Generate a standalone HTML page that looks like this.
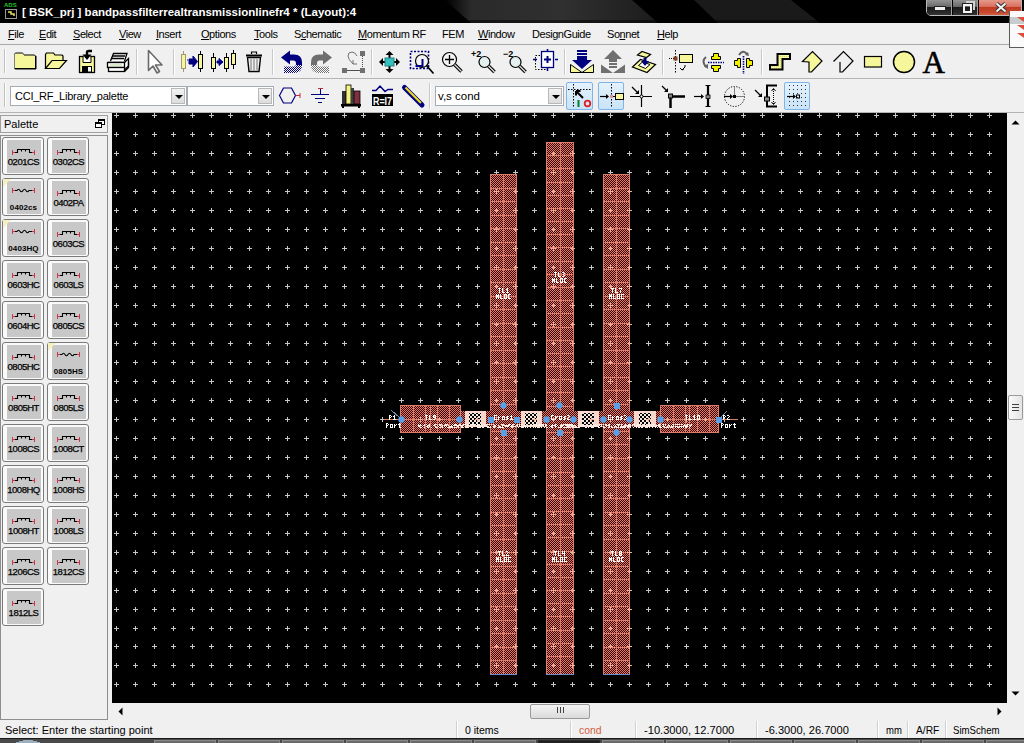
<!DOCTYPE html><html><head><meta charset="utf-8"><style>
*{margin:0;padding:0;box-sizing:border-box}
html,body{width:1024px;height:743px;overflow:hidden;background:#f0f0f0;font-family:"Liberation Sans", sans-serif;font-size:11px;color:#000}
.a{position:absolute}
.t{position:absolute;white-space:nowrap;line-height:1}
.u{text-decoration:underline}
.sep{position:absolute;width:2px;border-left:1px solid #c8c8c8;border-right:1px solid #fff}
.grip{position:absolute;width:2px;border-left:1px solid #c0c0c0;border-right:1px solid #fff}
.combo{position:absolute;background:#fff;border:1px solid #a5acb5}
.cbtn{position:absolute;background:linear-gradient(#f3f3f3,#dcdcdc);border:1px solid #b8b8b8}
.cbtn:after{content:"";position:absolute;left:3px;top:6px;border-left:4px solid transparent;border-right:4px solid transparent;border-top:4px solid #000}
.tog{position:absolute;background:linear-gradient(#e4f2fc,#c9e3f7);border:1px solid #7eb4ea;border-radius:2px}
.pb{position:absolute;width:42px;height:38px;border:1px solid #7a7a7a;border-radius:3px;background:#fafafa}
.pbi{position:absolute;left:4px;top:2px;width:34px;height:33px;background:#c8c8c8}
.pt{position:absolute;left:0;width:41px;top:18.5px;text-align:center;font-size:9.5px;letter-spacing:-0.5px;line-height:1;-webkit-text-stroke:0.25px #000}
.lbl{position:absolute;color:#fff;font-family:"Liberation Mono",monospace;font-size:6px;line-height:1;white-space:nowrap;font-weight:bold}
</style></head><body>
<svg class="a" style="left:0;top:0" width="1024" height="23"><defs><linearGradient id="tb1" x1="0" x2="1"><stop offset="0" stop-color="#000"/><stop offset="0.12" stop-color="#2a2a2a"/><stop offset="0.55" stop-color="#303030"/><stop offset="1" stop-color="#1c1c1c"/></linearGradient><filter id="bl" x="-0.2" y="-0.5" width="1.4" height="2"><feGaussianBlur stdDeviation="2.5 0"/></filter></defs><rect width="1024" height="23" fill="#000"/><path d="M445 0H632L658 23H471Z" fill="url(#tb1)"/><path d="M694 0H791L820 23H718Z" fill="#1a1a1a"/><rect y="20" width="1024" height="3" fill="#000" opacity="0.5"/></svg>
<svg class="a" style="left:3px;top:1px" width="16" height="20" viewBox="0 0 16 20"><text x="1" y="6" font-size="6" fill="#27c427" font-family="Liberation Sans" font-weight="bold">ADS</text><rect x="2.5" y="8.5" width="11" height="9" fill="#000" stroke="#9a9a9a"/><path d="M5 11h3v2h3v2" stroke="#e8e060" stroke-width="1.5" fill="none"/></svg>
<div class="t" style="left:22px;top:7px;color:#fff;font-weight:bold;font-size:11.5px;text-shadow:0 0 2px #000">[ BSK_prj ] bandpassfilterrealtransmissionlinefr4 * (Layout):4</div>
<div class="a" style="left:926px;top:-2px;width:96px;height:18px;border:1px solid #b8b8b8;border-radius:0 0 5px 5px;overflow:hidden;background:#000;box-shadow:0 0 0 1px #000"><div class="a" style="left:0;top:0;width:25px;height:17px;background:linear-gradient(#9a9a9a,#6a6a6a 45%,#1a1a1a 50%,#2a2a2a 80%,#3a3a3a);border-right:1px solid #a0a0a0"></div><div class="a" style="left:26px;top:0;width:25px;height:17px;background:linear-gradient(#9a9a9a,#6a6a6a 45%,#1a1a1a 50%,#2a2a2a 80%,#3a3a3a);border-right:1px solid #a0a0a0"></div><div class="a" style="left:52px;top:0;width:44px;height:17px;background:linear-gradient(#e8a090,#d87060 45%,#c03a20 50%,#c84a30 80%,#d86a50)"></div><div class="a" style="left:8px;top:8px;width:10px;height:3px;background:#f0f0f0;box-shadow:0 0 0 1px #222"></div><div class="a" style="left:36px;top:5px;width:9px;height:9px;border:2px solid #f4f4f4;box-shadow:0 0 0 1px #222"></div><div class="a" style="left:39px;top:2px;width:9px;height:9px;border-top:2px solid #d0d0d0;border-right:2px solid #d0d0d0"></div><svg class="a" style="left:67px;top:3px" width="14" height="12"><path d="M2.5 1.5l9 8M11.5 1.5l-9 8" stroke="#333" stroke-width="4"/><path d="M2.5 1.5l9 8M11.5 1.5l-9 8" stroke="#f4f4f4" stroke-width="2"/></svg></div>
<div class="a" style="left:0;top:23px;width:1024px;height:21px;background:#f0f0f0"></div>
<div class="a" style="left:0;top:44px;width:1024px;height:1px;background:#a8a8a8"></div>
<div class="a" style="left:1009px;top:11px;width:15px;height:37px;background:#fafafa;border-left:1px solid #5a5a5a;border-bottom:1px solid #5a5a5a"><div class="a" style="left:0;top:6px;width:15px;height:7px;background:#c8cccc"></div><svg class="a" style="left:7px;top:6px" width="10" height="26"><path d="M0 0H10V7Z M0 8H10V15Z M0 16H10V23Z" fill="#d8503a"/></svg></div>
<div class="t" style="left:8px;top:29px;letter-spacing:-0.45px"><span class="u">F</span>ile</div>
<div class="t" style="left:39px;top:29px;letter-spacing:-0.45px"><span class="u">E</span>dit</div>
<div class="t" style="left:73px;top:29px;letter-spacing:-0.45px"><span class="u">S</span>elect</div>
<div class="t" style="left:119px;top:29px;letter-spacing:-0.45px"><span class="u">V</span>iew</div>
<div class="t" style="left:156px;top:29px;letter-spacing:-0.45px"><span class="u">I</span>nsert</div>
<div class="t" style="left:201px;top:29px;letter-spacing:-0.45px"><span class="u">O</span>ptions</div>
<div class="t" style="left:254px;top:29px;letter-spacing:-0.45px"><span class="u">T</span>ools</div>
<div class="t" style="left:294px;top:29px;letter-spacing:-0.45px">S<span class="u">c</span>hematic</div>
<div class="t" style="left:358px;top:29px;letter-spacing:-0.45px"><span class="u">M</span>omentum RF</div>
<div class="t" style="left:442px;top:29px;letter-spacing:-0.45px">FEM</div>
<div class="t" style="left:478px;top:29px;letter-spacing:-0.45px"><span class="u">W</span>indow</div>
<div class="t" style="left:532px;top:29px;letter-spacing:-0.45px">DesignGuide</div>
<div class="t" style="left:607px;top:29px;letter-spacing:-0.45px">So<span class="u">n</span>net</div>
<div class="t" style="left:657px;top:29px;letter-spacing:-0.45px"><span class="u">H</span>elp</div>
<div class="a" style="left:0;top:78px;width:1024px;height:1px;background:#b4b4b4"></div>
<div class="grip" style="left:4px;top:49px;height:24px"></div>
<div class="sep" style="left:136px;top:49px;height:26px"></div>
<div class="sep" style="left:173px;top:49px;height:26px"></div>
<div class="sep" style="left:272px;top:49px;height:26px"></div>
<div class="sep" style="left:371px;top:49px;height:26px"></div>
<div class="sep" style="left:564px;top:49px;height:26px"></div>
<div class="sep" style="left:662px;top:49px;height:26px"></div>
<div class="sep" style="left:761px;top:49px;height:26px"></div>
<div class="a" style="left:0;top:112px;width:1024px;height:1px;background:#b4b4b4"></div>
<div class="grip" style="left:4px;top:83px;height:24px"></div>
<div class="combo" style="left:10px;top:86px;width:177px;height:20px"></div>
<div class="t" style="left:15px;top:91px;font-size:11px;letter-spacing:-0.25px">CCI_RF_Library_palette</div>
<div class="cbtn" style="left:171px;top:88px;width:14px;height:16px"></div>
<div class="combo" style="left:187px;top:86px;width:87px;height:20px"></div>
<div class="cbtn" style="left:258px;top:88px;width:14px;height:16px"></div>
<div class="sep" style="left:429px;top:83px;height:26px"></div>
<div class="combo" style="left:435px;top:86px;width:129px;height:20px"></div>
<div class="t" style="left:438px;top:91px;font-size:11.5px">v,s cond</div>
<div class="cbtn" style="left:548px;top:88px;width:14px;height:16px"></div>
<div class="tog" style="left:566px;top:82px;width:27px;height:28px"></div>
<div class="tog" style="left:598px;top:82px;width:26px;height:28px"></div>
<div class="tog" style="left:784px;top:82px;width:26px;height:28px"></div>
<svg class="a" style="left:0;top:0" width="1024" height="113" viewBox="0 0 1024 113"><defs><pattern id="dy" width="2" height="2" patternUnits="userSpaceOnUse"><rect width="2" height="2" fill="#f8f8a0"/><rect width="1" height="1" fill="#d8d870"/></pattern><pattern id="dn" width="2" height="2" patternUnits="userSpaceOnUse"><rect width="2" height="2" fill="#fff"/><rect width="1" height="1" fill="#000080"/><rect x="1" y="1" width="1" height="1" fill="#000080"/></pattern><pattern id="dg" width="2" height="2" patternUnits="userSpaceOnUse"><rect width="2" height="2" fill="#fff"/><rect width="1" height="1" fill="#6e6e6e"/><rect x="1" y="1" width="1" height="1" fill="#6e6e6e"/></pattern><pattern id="gd" width="4" height="4" patternUnits="userSpaceOnUse"><rect x="1" y="1" width="1" height="1" fill="#303030"/></pattern></defs><path d="M14.5 68.5V54.5l1-1.5h7l1.5 2h10.5l1 1v12.5z" fill="#f6f69a" stroke="#000"/><path d="M14.5 68.5V54.5l1-1.5h7l1.5 2" stroke="#808080" fill="none"/><rect x="15" y="68" width="21" height="1.5" fill="#000"/><rect x="35" y="56" width="1.5" height="13" fill="#000"/><path d="M45.5 68.5V54.5l1-1.5h7l1.5 2h7l1 1v4" fill="#f6f69a" stroke="#000" stroke-width="1.2"/><path d="M45.5 68.5L52 60.5h14.5l-7 8z" fill="#f6f69a" stroke="#000" stroke-width="1.2"/><rect x="79.5" y="56.5" width="15" height="16" fill="#f6f69a" stroke="#000" stroke-width="1.3"/><rect x="83.5" y="55.8" width="7" height="6.5" fill="#fff"/><path d="M83 55.8v6.7h8v-6.7" stroke="#000" fill="none"/><rect x="82" y="66" width="10" height="6.5" fill="#000"/><rect x="88" y="67" width="3" height="4.5" fill="#fff"/><path d="M82.5 54.5h9l-4.5 5.5z" fill="#000"/><path d="M87 55.5v-3q0-1.5 1.5-1.5h3.5" stroke="#000" stroke-width="2.4" fill="none"/><path d="M110.5 61L113.5 53.5H127L124.5 61" fill="#fff" stroke="#000" stroke-width="1.3"/><path d="M112.5 56h12.5M111.5 58.5h12.5" stroke="#000" stroke-width="1.3"/><path d="M108 62.5H124.5L128.5 58.5V66L124.5 70" fill="#fff" stroke="#000" stroke-width="1.3"/><rect x="107.5" y="62.5" width="17" height="5" fill="#fff" stroke="#000" stroke-width="1.3"/><rect x="110" y="64.5" width="12" height="1" fill="#b8d890"/><rect x="108.5" y="67.5" width="16" height="4" fill="#fff" stroke="#000" stroke-width="1.3"/><path d="M124.5 71.5L128.5 67.5V62" fill="none" stroke="#000" stroke-width="1.3"/><path d="M148.5 50.5v20l4.5-4.5 4 7 2.5-1.5-4-6.5h6.5z" fill="#fff" stroke="#6a6a6a" stroke-width="1.6" stroke-linejoin="round"/><path d="M183.5 51v21M200.5 51v21" stroke="#000" /><path d="M183.5 51v21" stroke="#a09870"/><rect x="181.5" y="54.5" width="4" height="14" fill="#f6f69a" stroke="#a09870"/><rect x="198.5" y="54.5" width="4" height="14" fill="#f6f69a" stroke="#000"/><path d="M187 60h1M189 59h4v-3l4.5 5.5-4.5 5.5v-3h-4z" fill="#000080" stroke="#000080" stroke-width="1"/><path d="M213.5 53v19" stroke="#000"/><rect x="211.5" y="57.5" width="4" height="11.0" fill="#f6f69a" stroke="#000"/><path d="M226.5 53v19" stroke="#000"/><rect x="224.5" y="57.5" width="4" height="11.0" fill="#f6f69a" stroke="#000"/><path d="M233.5 50v19" stroke="#000"/><rect x="231.5" y="53.5" width="4" height="11.0" fill="#f6f69a" stroke="#000"/><path d="M217 61h2v-2.5l4 3.5-4 3.5v-2.5h-2z" fill="#000080" stroke="#000080" stroke-width="1"/><path d="M246 55.5h16" stroke="#000" stroke-width="2"/><path d="M251.5 54v-2h5v2" stroke="#000" fill="none" stroke-width="1.2"/><path d="M247.5 57.5l1.5 14h10l1.5-14z" fill="#f0f0f0" stroke="#000" stroke-width="1.4"/><path d="M251 59v11M254 59v11M257 59v11" stroke="#707070"/><clipPath id="ctop"><rect x="0" y="0" width="1024" height="65"/></clipPath><clipPath id="cbot"><rect x="0" y="65" width="1024" height="20"/></clipPath><path d="M281 57.5L290 50.5V54.5H294Q302 54.5 302 62.5V65.5Q302 73 294 73H284V66.5H293.5Q296 66.5 296 64V63.5Q296 60.5 293.5 60.5H290V64.5Z" fill="#000080" clip-path="url(#ctop)"/><path d="M281 57.5L290 50.5V54.5H294Q302 54.5 302 62.5V65.5Q302 73 294 73H284V66.5H293.5Q296 66.5 296 64V63.5Q296 60.5 293.5 60.5H290V64.5Z" fill="url(#dn)" clip-path="url(#cbot)"/><g transform="translate(613,0) scale(-1,1)"><path d="M281 57.5L290 50.5V54.5H294Q302 54.5 302 62.5V65.5Q302 73 294 73H284V66.5H293.5Q296 66.5 296 64V63.5Q296 60.5 293.5 60.5H290V64.5Z" fill="#6e6e6e" clip-path="url(#ctop)"/><path d="M281 57.5L290 50.5V54.5H294Q302 54.5 302 62.5V65.5Q302 73 294 73H284V66.5H293.5Q296 66.5 296 64V63.5Q296 60.5 293.5 60.5H290V64.5Z" fill="url(#dg)" clip-path="url(#cbot)"/></g><rect x="360" y="51" width="5" height="5" fill="#707070"/><rect x="342" y="68" width="5" height="5" fill="#707070"/><rect x="360" y="68" width="5" height="5" fill="#707070"/><path d="M347 70.5h13" stroke="#505050"/><path d="M362.5 56v12" stroke="#505050" stroke-dasharray="1 1"/><path d="M357 56q-2-4-5-4q-4 0-4 4q0 3 5 8M353 60v4h4" stroke="#707070" fill="none"/><path d="M389.5 51l-4 4h8z M389.5 73l-4-4h8z M379 62l4-4v8z M400 62l-4-4v8z" fill="#000"/><path d="M389.5 54v16M382 62h16" stroke="#000" stroke-width="2"/><rect x="385" y="58" width="9" height="8" fill="#38c0c0" stroke="#208080"/><rect x="410.5" y="51.5" width="18" height="17" fill="none" stroke="#000080" stroke-width="1.6" stroke-dasharray="2 1.5"/><circle cx="422" cy="61" r="6.5" fill="#f4f4f4" stroke="#000" stroke-width="1.2"/><path d="M415.5 66h7v-7" stroke="#000080" stroke-width="2" fill="none"/><path d="M426.5 65.5l7 8" stroke="#000" stroke-width="1.6"/><circle cx="449.5" cy="59.5" r="7" fill="#f4f4f4" stroke="#000" stroke-width="1.2"/><path d="M445 59.5h9M449.5 55v9" stroke="#000" stroke-width="1.3"/><path d="M454.5 64.5l7 7" stroke="#000" stroke-width="3.6"/><path d="M454.5 64.5l7 7" stroke="#e0e0e0" stroke-width="1.2"/><circle cx="484.5" cy="62" r="5.5" fill="#e4f0f0" stroke="#000" stroke-width="1.2"/><path d="M488.5 66l6 6" stroke="#000" stroke-width="3.6"/><path d="M488.5 66l6 6" stroke="#e8e8e8" stroke-width="1.2"/><text x="471" y="57" font-family="Liberation Sans" font-size="9" font-weight="bold" fill="#000">+2</text><circle cx="515.5" cy="62" r="5.5" fill="#e4f0f0" stroke="#000" stroke-width="1.2"/><path d="M519.5 66l6 6" stroke="#000" stroke-width="3.6"/><path d="M519.5 66l6 6" stroke="#e8e8e8" stroke-width="1.2"/><text x="503" y="57" font-family="Liberation Sans" font-size="9" font-weight="bold" fill="#000">−2</text><rect x="535.5" y="55.5" width="10" height="14" fill="none" stroke="#000" stroke-dasharray="1.5 1.5"/><rect x="541.5" y="51.5" width="12" height="16" fill="#fff" stroke="#000080" stroke-width="1.3"/><path d="M544 59.5h7M547.5 56v7" stroke="#000080" stroke-width="2"/><path d="M533 59.5h4M555 59.5h3M547.5 49v3M547.5 68v3" stroke="#000080" stroke-width="1.6"/><path d="M570.5 64.5v8h23v-8l-11.5 8z" fill="#f6f69a" stroke="#000"/><rect x="577" y="50" width="10" height="2" fill="#000080"/><rect x="577" y="53" width="10" height="2" fill="#000080"/><path d="M577 56h10v4h5l-10 9-10-9h5z" fill="#000080"/><path d="M601 64.5v8.5h24v-8.5l-12 8.5z" fill="#707070"/><path d="M613 50l-9 9h5v3h8v-3h5z" fill="#707070"/><rect x="609" y="63" width="8" height="2" fill="#707070"/><rect x="609" y="66" width="8" height="2" fill="#707070"/><path d="M632.5 67L640.5 59.5L655.5 64.5L647 72.5Z" fill="#f6f69a" stroke="#000" stroke-width="1.2"/><path d="M638.5 65.5L642.5 62L650 64.5L645.5 68.5Z" fill="#fff" stroke="#000" stroke-width="1"/><path d="M637.5 55L642 51.5L650.5 54.5L646.5 57.5Z" fill="#f6f69a" stroke="#000" stroke-width="1.2"/><path d="M643.5 58h3v3h2.5l-4 5-4-5h2.5z" fill="#000080"/><path d="M675.5 50v23" stroke="#000" stroke-dasharray="1.5 1.5"/><path d="M669 58.5h6" stroke="#000" stroke-dasharray="1 1"/><rect x="673.5" y="56.5" width="4" height="4" fill="#804020"/><rect x="679.5" y="54.5" width="13" height="8" fill="#f6f69a" stroke="#000"/><path d="M685 65v2l-3 3M680 68l2 2 2-1" stroke="#000" fill="none"/><path d="M711.5 59.5v-3h2v-3h5v3h2v3z M711.5 65.5v3h2v3h5v-3h2v-3z" fill="#f0f000" stroke="#000"/><path d="M708 62.5h16" stroke="#000080" stroke-width="1.6" stroke-dasharray="1.5 1"/><path d="M706 57q-5 4 0 10" stroke="#606060" stroke-width="2" fill="none"/><path d="M704 66l4 3v-5z" fill="#606060"/><path d="M740.5 58.5h-3v2h-3v5h3v2h3z M746.5 58.5h3v2h3v5h-3v2h-3z" fill="#f0f000" stroke="#000"/><path d="M743.5 56v18" stroke="#000080" stroke-width="1.6" stroke-dasharray="1.5 1"/><path d="M739 55q4-6 8-1" stroke="#606060" stroke-width="2" fill="none"/><path d="M745 55l4 1-1-4z" fill="#606060"/><path d="M769 64h7.5v-11h14.5v7h-7.5v10.5h-14.5z" fill="#000"/><path d="M771 66h7.5v-11h10.5v3h-7.5v10.5h-10.5z" fill="url(#dy)"/><path d="M802.5 61.5l10-10 9.5 9.5-10.5 11h-2.5v-10z" fill="#f6f69a" stroke="#000" stroke-width="1.2" stroke-linejoin="miter"/><path d="M833.5 61.5l10-10 9.5 9.5-10.5 11h-2.5v-10" fill="none" stroke="#000" stroke-width="1.2"/><rect x="864.5" y="56.5" width="17" height="10.5" fill="#f6f69a" stroke="#000" stroke-width="1.2"/><circle cx="904" cy="62" r="10.5" fill="#f6f69a" stroke="#000" stroke-width="1.5"/><text x="922.5" y="72.5" font-family="Liberation Serif" font-size="31" fill="#000" stroke="#000" stroke-width="0.6">A</text><path d="M283.5 88l-4 7.5 4 7.5h8l4-7.5-4-7.5z" fill="none" stroke="#000080" stroke-width="1.2"/><path d="M295.5 95.5h4.5M300 93v5" stroke="#c03040"/><path d="M311 94.5h18M315 98.5h10M318 102.5h4" stroke="#000080" stroke-width="1.2"/><path d="M320.5 88v6" stroke="#000080"/><path d="M318 88.5h5" stroke="#c03040"/><rect x="341" y="104" width="20" height="2.5" fill="#000"/><rect x="342" y="106" width="2" height="2" fill="#000"/><rect x="358" y="106" width="2" height="2" fill="#000"/><rect x="342" y="91" width="4" height="13" fill="#303030"/><rect x="346" y="85" width="5" height="19" fill="#f4f480" stroke="#000" stroke-width="0.8"/><rect x="351" y="88" width="3" height="16" fill="#404040"/><rect x="354" y="91" width="6" height="13" fill="#803040" stroke="#000" stroke-width="0.8"/><rect x="372" y="94" width="21" height="12" fill="#000"/><text x="373" y="104.5" font-family="Liberation Sans" font-size="10" font-weight="bold" fill="#fff" textLength="19" lengthAdjust="spacingAndGlyphs">R=I7</text><path d="M372 90.5h4l4-4.5 5 5.5 3-2h5" stroke="#000080" stroke-width="1.5" fill="none"/><path d="M404.5 87.5L422 105" stroke="#000080" stroke-width="5" stroke-linecap="round"/><path d="M405.5 87.5L421 103" stroke="#e8d820" stroke-width="2.2"/><path d="M573.5 84v24" stroke="#000" stroke-dasharray="1.5 1.5"/><path d="M568 89.5h24" stroke="#000" stroke-dasharray="1.5 1.5"/><path d="M576 91l7 7M576 91h4.5M576 91v4.5" stroke="#000" stroke-width="2"/><rect x="577.5" y="100" width="2" height="7" fill="#008030"/><circle cx="587.5" cy="103.5" r="2.8" fill="none" stroke="#e02020" stroke-width="1.8"/><path d="M611.5 84v24" stroke="#000" stroke-dasharray="1.5 1.5"/><path d="M600 96.5h8" stroke="#000" stroke-width="1.2"/><path d="M606 94l3 2.5-3 2.5z" fill="#000"/><rect x="610" y="95" width="3" height="3" fill="#e09090"/><path d="M613 96.5h2" stroke="#000"/><rect x="615.5" y="93.5" width="8" height="6" fill="#f6f69a" stroke="#000"/><path d="M641.5 85v22M630 96.5h22" stroke="#000" stroke-width="1.2"/><circle cx="641.5" cy="96.5" r="1.5" fill="#fff" stroke="#000"/><path d="M632 87l6 6" stroke="#000" stroke-width="1.2"/><path d="M639 94v-4l-4 4z" fill="#000"/><path d="M671 96.5h14" stroke="#000" stroke-width="2.5"/><path d="M670.5 96v12" stroke="#000" stroke-width="2.5"/><rect x="668.5" y="94" width="4" height="4" fill="#808080" stroke="#000"/><path d="M662 86l5 5" stroke="#000" stroke-width="1.2"/><path d="M668 92v-4l-4 4z" fill="#000"/><path d="M708 85v22" stroke="#000" stroke-width="2.2"/><path d="M705.5 85.5h5M705.5 106.5h5" stroke="#000" stroke-width="1.2"/><rect x="706" y="95" width="4" height="3.5" fill="#909090" stroke="#000" stroke-width="0.8"/><path d="M694 96.5h8" stroke="#000" stroke-width="1.2"/><path d="M701 94l3 2.5-3 2.5z" fill="#000"/><circle cx="734.5" cy="96.5" r="10" fill="none" stroke="#000" stroke-dasharray="1.2 1.5"/><path d="M734.5 96.5v-10M734.5 96.5h10" stroke="#808080"/><rect x="733" y="95" width="3" height="3" fill="#000"/><path d="M724 96.5h7" stroke="#000" stroke-width="1.2"/><path d="M730 94l3 2.5-3 2.5z" fill="#000"/><path d="M777 85.5h-10v21h10" stroke="#000" stroke-width="2" fill="none"/><rect x="764.5" y="97" width="5" height="4" fill="#909090" stroke="#000"/><path d="M773.5 89v15" stroke="#000" stroke-dasharray="1 1"/><path d="M771.5 91l2-2.5 2 2.5M771.5 102l2 2.5 2-2.5" stroke="#000" fill="none"/><path d="M755 90l6 6" stroke="#000" stroke-width="1.2"/><path d="M762 97v-4l-4 4z" fill="#000"/><rect x="786" y="85" width="22" height="22" fill="url(#gd)"/><path d="M787 96.5h7" stroke="#000" stroke-width="1.2"/><path d="M793 94l3 2.5-3 2.5z" fill="#000"/><rect x="796.5" y="95" width="3" height="3" fill="none" stroke="#000"/></svg>
<div class="a" style="left:0;top:115px;width:108px;height:18px;border:1px solid #a0a0a0;background:#f0f0f0"></div>
<div class="t" style="left:4px;top:119px;font-size:11px">Palette</div>
<svg class="a" style="left:95px;top:118px" width="10" height="11"><rect x="3.5" y="1.5" width="6" height="5" fill="#fff" stroke="#000"/><rect x="3.5" y="1.5" width="6" height="1.5" fill="#000"/><rect x="0.5" y="4.5" width="6" height="5" fill="#fff" stroke="#000"/><rect x="0.5" y="4.5" width="6" height="1.5" fill="#000"/></svg>
<div class="a" style="left:0;top:135px;width:108px;height:585px;border:1px solid #8e8e8e;background:#f0f0f0"></div>
<div class="pb" style="left:2px;top:137px"><div class="pbi"></div><svg class="a" style="left:9px;top:11px" width="24" height="8" viewBox="0 0 24 8"><path d="M0.5 1v5M22.5 1v5" stroke="#c83850" stroke-width="1"/><path d="M0.5 3.5h3" stroke="#c83850"/><path d="M19.5 3.5h3" stroke="#c83850"/><path d="M3 3.5H5.5V0.5H17.5V3.5H20M9.5 0.5v2M13.5 0.5v2" stroke="#000" fill="none" stroke-width="1.1"/></svg><div class="pt">0201CS</div></div>
<div class="pb" style="left:47px;top:137px"><div class="pbi"></div><svg class="a" style="left:9px;top:11px" width="24" height="8" viewBox="0 0 24 8"><path d="M0.5 1v5M22.5 1v5" stroke="#c83850" stroke-width="1"/><path d="M0.5 3.5h3" stroke="#c83850"/><path d="M19.5 3.5h3" stroke="#c83850"/><path d="M3 3.5H5.5V0.5H17.5V3.5H20M9.5 0.5v2M13.5 0.5v2" stroke="#000" fill="none" stroke-width="1.1"/></svg><div class="pt">0302CS</div></div>
<div class="pb" style="left:2px;top:178px"><div class="pbi"></div><div class="a" style="left:0;top:0;width:0;height:0;border-top:8px solid #f4f0c0;border-right:8px solid transparent"></div><svg class="a" style="left:9px;top:8px" width="24" height="8" viewBox="0 0 24 8"><path d="M0.5 1v5M22.5 1v5" stroke="#c83850" stroke-width="1"/><path d="M0.5 3.5h3" stroke="#c83850"/><path d="M19.5 3.5h3" stroke="#c83850"/><path d="M3 3.5H5Q6.5 1 8 3.5T11 3.5T14 3.5T17 3.5H20" stroke="#000" fill="none" stroke-width="1.1"/><path d="M0 0l4 0l-4 4z" fill="#f4f0b0" transform="translate(-5,-7)"/></svg><div class="pt" style="font-size:8px;font-weight:bold;letter-spacing:0.1px;top:25px;-webkit-text-stroke:0">0402cs</div></div>
<div class="pb" style="left:47px;top:178px"><div class="pbi"></div><svg class="a" style="left:9px;top:11px" width="24" height="8" viewBox="0 0 24 8"><path d="M0.5 1v5M22.5 1v5" stroke="#c83850" stroke-width="1"/><path d="M0.5 3.5h3" stroke="#c83850"/><path d="M19.5 3.5h3" stroke="#c83850"/><path d="M3 3.5H5.5V0.5H17.5V3.5H20M9.5 0.5v2M13.5 0.5v2" stroke="#000" fill="none" stroke-width="1.1"/></svg><div class="pt">0402PA</div></div>
<div class="pb" style="left:2px;top:219px"><div class="pbi"></div><div class="a" style="left:0;top:0;width:0;height:0;border-top:8px solid #f4f0c0;border-right:8px solid transparent"></div><svg class="a" style="left:9px;top:8px" width="24" height="8" viewBox="0 0 24 8"><path d="M0.5 1v5M22.5 1v5" stroke="#c83850" stroke-width="1"/><path d="M0.5 3.5h3" stroke="#c83850"/><path d="M19.5 3.5h3" stroke="#c83850"/><path d="M3 3.5H5Q6.5 1 8 3.5T11 3.5T14 3.5T17 3.5H20" stroke="#000" fill="none" stroke-width="1.1"/><path d="M0 0l4 0l-4 4z" fill="#f4f0b0" transform="translate(-5,-7)"/></svg><div class="pt" style="font-size:8px;font-weight:bold;letter-spacing:0.1px;top:25px;-webkit-text-stroke:0">0403HQ</div></div>
<div class="pb" style="left:47px;top:219px"><div class="pbi"></div><svg class="a" style="left:9px;top:11px" width="24" height="8" viewBox="0 0 24 8"><path d="M0.5 1v5M22.5 1v5" stroke="#c83850" stroke-width="1"/><path d="M0.5 3.5h3" stroke="#c83850"/><path d="M19.5 3.5h3" stroke="#c83850"/><path d="M3 3.5H5.5V0.5H17.5V3.5H20M9.5 0.5v2M13.5 0.5v2" stroke="#000" fill="none" stroke-width="1.1"/></svg><div class="pt">0603CS</div></div>
<div class="pb" style="left:2px;top:260px"><div class="pbi"></div><svg class="a" style="left:9px;top:11px" width="24" height="8" viewBox="0 0 24 8"><path d="M0.5 1v5M22.5 1v5" stroke="#c83850" stroke-width="1"/><path d="M0.5 3.5h3" stroke="#c83850"/><path d="M19.5 3.5h3" stroke="#c83850"/><path d="M3 3.5H5.5V0.5H17.5V3.5H20M9.5 0.5v2M13.5 0.5v2" stroke="#000" fill="none" stroke-width="1.1"/></svg><div class="pt">0603HC</div></div>
<div class="pb" style="left:47px;top:260px"><div class="pbi"></div><svg class="a" style="left:9px;top:11px" width="24" height="8" viewBox="0 0 24 8"><path d="M0.5 1v5M22.5 1v5" stroke="#c83850" stroke-width="1"/><path d="M0.5 3.5h3" stroke="#c83850"/><path d="M19.5 3.5h3" stroke="#c83850"/><path d="M3 3.5H5.5V0.5H17.5V3.5H20M9.5 0.5v2M13.5 0.5v2" stroke="#000" fill="none" stroke-width="1.1"/></svg><div class="pt">0603LS</div></div>
<div class="pb" style="left:2px;top:301px"><div class="pbi"></div><svg class="a" style="left:9px;top:11px" width="24" height="8" viewBox="0 0 24 8"><path d="M0.5 1v5M22.5 1v5" stroke="#c83850" stroke-width="1"/><path d="M0.5 3.5h3" stroke="#c83850"/><path d="M19.5 3.5h3" stroke="#c83850"/><path d="M3 3.5H5.5V0.5H17.5V3.5H20M9.5 0.5v2M13.5 0.5v2" stroke="#000" fill="none" stroke-width="1.1"/></svg><div class="pt">0604HC</div></div>
<div class="pb" style="left:47px;top:301px"><div class="pbi"></div><svg class="a" style="left:9px;top:11px" width="24" height="8" viewBox="0 0 24 8"><path d="M0.5 1v5M22.5 1v5" stroke="#c83850" stroke-width="1"/><path d="M0.5 3.5h3" stroke="#c83850"/><path d="M19.5 3.5h3" stroke="#c83850"/><path d="M3 3.5H5.5V0.5H17.5V3.5H20M9.5 0.5v2M13.5 0.5v2" stroke="#000" fill="none" stroke-width="1.1"/></svg><div class="pt">0805CS</div></div>
<div class="pb" style="left:2px;top:342px"><div class="pbi"></div><svg class="a" style="left:9px;top:11px" width="24" height="8" viewBox="0 0 24 8"><path d="M0.5 1v5M22.5 1v5" stroke="#c83850" stroke-width="1"/><path d="M0.5 3.5h3" stroke="#c83850"/><path d="M19.5 3.5h3" stroke="#c83850"/><path d="M3 3.5H5.5V0.5H17.5V3.5H20M9.5 0.5v2M13.5 0.5v2" stroke="#000" fill="none" stroke-width="1.1"/></svg><div class="pt">0805HC</div></div>
<div class="pb" style="left:47px;top:342px"><div class="pbi"></div><div class="a" style="left:0;top:0;width:0;height:0;border-top:8px solid #f4f0c0;border-right:8px solid transparent"></div><svg class="a" style="left:9px;top:8px" width="24" height="8" viewBox="0 0 24 8"><path d="M0.5 1v5M22.5 1v5" stroke="#c83850" stroke-width="1"/><path d="M0.5 3.5h3" stroke="#c83850"/><path d="M19.5 3.5h3" stroke="#c83850"/><path d="M3 3.5H5Q6.5 1 8 3.5T11 3.5T14 3.5T17 3.5H20" stroke="#000" fill="none" stroke-width="1.1"/><path d="M0 0l4 0l-4 4z" fill="#f4f0b0" transform="translate(-5,-7)"/></svg><div class="pt" style="font-size:8px;font-weight:bold;letter-spacing:0.1px;top:25px;-webkit-text-stroke:0">0805HS</div></div>
<div class="pb" style="left:2px;top:383px"><div class="pbi"></div><svg class="a" style="left:9px;top:11px" width="24" height="8" viewBox="0 0 24 8"><path d="M0.5 1v5M22.5 1v5" stroke="#c83850" stroke-width="1"/><path d="M0.5 3.5h3" stroke="#c83850"/><path d="M19.5 3.5h3" stroke="#c83850"/><path d="M3 3.5H5.5V0.5H17.5V3.5H20M9.5 0.5v2M13.5 0.5v2" stroke="#000" fill="none" stroke-width="1.1"/></svg><div class="pt">0805HT</div></div>
<div class="pb" style="left:47px;top:383px"><div class="pbi"></div><svg class="a" style="left:9px;top:11px" width="24" height="8" viewBox="0 0 24 8"><path d="M0.5 1v5M22.5 1v5" stroke="#c83850" stroke-width="1"/><path d="M0.5 3.5h3" stroke="#c83850"/><path d="M19.5 3.5h3" stroke="#c83850"/><path d="M3 3.5H5.5V0.5H17.5V3.5H20M9.5 0.5v2M13.5 0.5v2" stroke="#000" fill="none" stroke-width="1.1"/></svg><div class="pt">0805LS</div></div>
<div class="pb" style="left:2px;top:424px"><div class="pbi"></div><svg class="a" style="left:9px;top:11px" width="24" height="8" viewBox="0 0 24 8"><path d="M0.5 1v5M22.5 1v5" stroke="#c83850" stroke-width="1"/><path d="M0.5 3.5h3" stroke="#c83850"/><path d="M19.5 3.5h3" stroke="#c83850"/><path d="M3 3.5H5.5V0.5H17.5V3.5H20M9.5 0.5v2M13.5 0.5v2" stroke="#000" fill="none" stroke-width="1.1"/></svg><div class="pt">1008CS</div></div>
<div class="pb" style="left:47px;top:424px"><div class="pbi"></div><svg class="a" style="left:9px;top:11px" width="24" height="8" viewBox="0 0 24 8"><path d="M0.5 1v5M22.5 1v5" stroke="#c83850" stroke-width="1"/><path d="M0.5 3.5h3" stroke="#c83850"/><path d="M19.5 3.5h3" stroke="#c83850"/><path d="M3 3.5H5.5V0.5H17.5V3.5H20M9.5 0.5v2M13.5 0.5v2" stroke="#000" fill="none" stroke-width="1.1"/></svg><div class="pt">1008CT</div></div>
<div class="pb" style="left:2px;top:465px"><div class="pbi"></div><svg class="a" style="left:9px;top:11px" width="24" height="8" viewBox="0 0 24 8"><path d="M0.5 1v5M22.5 1v5" stroke="#c83850" stroke-width="1"/><path d="M0.5 3.5h3" stroke="#c83850"/><path d="M19.5 3.5h3" stroke="#c83850"/><path d="M3 3.5H5.5V0.5H17.5V3.5H20M9.5 0.5v2M13.5 0.5v2" stroke="#000" fill="none" stroke-width="1.1"/></svg><div class="pt">1008HQ</div></div>
<div class="pb" style="left:47px;top:465px"><div class="pbi"></div><svg class="a" style="left:9px;top:11px" width="24" height="8" viewBox="0 0 24 8"><path d="M0.5 1v5M22.5 1v5" stroke="#c83850" stroke-width="1"/><path d="M0.5 3.5h3" stroke="#c83850"/><path d="M19.5 3.5h3" stroke="#c83850"/><path d="M3 3.5H5.5V0.5H17.5V3.5H20M9.5 0.5v2M13.5 0.5v2" stroke="#000" fill="none" stroke-width="1.1"/></svg><div class="pt">1008HS</div></div>
<div class="pb" style="left:2px;top:506px"><div class="pbi"></div><svg class="a" style="left:9px;top:11px" width="24" height="8" viewBox="0 0 24 8"><path d="M0.5 1v5M22.5 1v5" stroke="#c83850" stroke-width="1"/><path d="M0.5 3.5h3" stroke="#c83850"/><path d="M19.5 3.5h3" stroke="#c83850"/><path d="M3 3.5H5.5V0.5H17.5V3.5H20M9.5 0.5v2M13.5 0.5v2" stroke="#000" fill="none" stroke-width="1.1"/></svg><div class="pt">1008HT</div></div>
<div class="pb" style="left:47px;top:506px"><div class="pbi"></div><svg class="a" style="left:9px;top:11px" width="24" height="8" viewBox="0 0 24 8"><path d="M0.5 1v5M22.5 1v5" stroke="#c83850" stroke-width="1"/><path d="M0.5 3.5h3" stroke="#c83850"/><path d="M19.5 3.5h3" stroke="#c83850"/><path d="M3 3.5H5.5V0.5H17.5V3.5H20M9.5 0.5v2M13.5 0.5v2" stroke="#000" fill="none" stroke-width="1.1"/></svg><div class="pt">1008LS</div></div>
<div class="pb" style="left:2px;top:547px"><div class="pbi"></div><svg class="a" style="left:9px;top:11px" width="24" height="8" viewBox="0 0 24 8"><path d="M0.5 1v5M22.5 1v5" stroke="#c83850" stroke-width="1"/><path d="M0.5 3.5h3" stroke="#c83850"/><path d="M19.5 3.5h3" stroke="#c83850"/><path d="M3 3.5H5.5V0.5H17.5V3.5H20M9.5 0.5v2M13.5 0.5v2" stroke="#000" fill="none" stroke-width="1.1"/></svg><div class="pt">1206CS</div></div>
<div class="pb" style="left:47px;top:547px"><div class="pbi"></div><svg class="a" style="left:9px;top:11px" width="24" height="8" viewBox="0 0 24 8"><path d="M0.5 1v5M22.5 1v5" stroke="#c83850" stroke-width="1"/><path d="M0.5 3.5h3" stroke="#c83850"/><path d="M19.5 3.5h3" stroke="#c83850"/><path d="M3 3.5H5.5V0.5H17.5V3.5H20M9.5 0.5v2M13.5 0.5v2" stroke="#000" fill="none" stroke-width="1.1"/></svg><div class="pt">1812CS</div></div>
<div class="pb" style="left:2px;top:588px"><div class="pbi"></div><svg class="a" style="left:9px;top:11px" width="24" height="8" viewBox="0 0 24 8"><path d="M0.5 1v5M22.5 1v5" stroke="#c83850" stroke-width="1"/><path d="M0.5 3.5h3" stroke="#c83850"/><path d="M19.5 3.5h3" stroke="#c83850"/><path d="M3 3.5H5.5V0.5H17.5V3.5H20M9.5 0.5v2M13.5 0.5v2" stroke="#000" fill="none" stroke-width="1.1"/></svg><div class="pt">1812LS</div></div>
<div class="a" style="left:112px;top:113px;width:895px;height:590px;background:#000;overflow:hidden">
<svg width="895" height="590" viewBox="112 113 895 590" style="position:absolute;left:0;top:0" shape-rendering="crispEdges"><path fill="#c8c8c8" d="M114 115h5v1h-5zM116 113h1v5h-1zM114 134h5v1h-5zM116 132h1v5h-1zM114 153h5v1h-5zM116 151h1v5h-1zM114 172h5v1h-5zM116 170h1v5h-1zM114 191h5v1h-5zM116 189h1v5h-1zM114 210h5v1h-5zM116 208h1v5h-1zM114 229h5v1h-5zM116 227h1v5h-1zM114 248h5v1h-5zM116 246h1v5h-1zM114 267h5v1h-5zM116 265h1v5h-1zM114 286h5v1h-5zM116 284h1v5h-1zM114 305h5v1h-5zM116 303h1v5h-1zM114 324h5v1h-5zM116 322h1v5h-1zM114 343h5v1h-5zM116 341h1v5h-1zM114 362h5v1h-5zM116 360h1v5h-1zM114 381h5v1h-5zM116 379h1v5h-1zM114 400h5v1h-5zM116 398h1v5h-1zM114 419h5v1h-5zM116 417h1v5h-1zM114 438h5v1h-5zM116 436h1v5h-1zM114 457h5v1h-5zM116 455h1v5h-1zM114 476h5v1h-5zM116 474h1v5h-1zM114 495h5v1h-5zM116 493h1v5h-1zM114 514h5v1h-5zM116 512h1v5h-1zM114 533h5v1h-5zM116 531h1v5h-1zM114 552h5v1h-5zM116 550h1v5h-1zM114 571h5v1h-5zM116 569h1v5h-1zM114 590h5v1h-5zM116 588h1v5h-1zM114 609h5v1h-5zM116 607h1v5h-1zM114 628h5v1h-5zM116 626h1v5h-1zM114 646h5v1h-5zM116 644h1v5h-1zM114 665h5v1h-5zM116 663h1v5h-1zM114 684h5v1h-5zM116 682h1v5h-1zM133 115h5v1h-5zM135 113h1v5h-1zM133 134h5v1h-5zM135 132h1v5h-1zM133 153h5v1h-5zM135 151h1v5h-1zM133 172h5v1h-5zM135 170h1v5h-1zM133 191h5v1h-5zM135 189h1v5h-1zM133 210h5v1h-5zM135 208h1v5h-1zM133 229h5v1h-5zM135 227h1v5h-1zM133 248h5v1h-5zM135 246h1v5h-1zM133 267h5v1h-5zM135 265h1v5h-1zM133 286h5v1h-5zM135 284h1v5h-1zM133 305h5v1h-5zM135 303h1v5h-1zM133 324h5v1h-5zM135 322h1v5h-1zM133 343h5v1h-5zM135 341h1v5h-1zM133 362h5v1h-5zM135 360h1v5h-1zM133 381h5v1h-5zM135 379h1v5h-1zM133 400h5v1h-5zM135 398h1v5h-1zM133 419h5v1h-5zM135 417h1v5h-1zM133 438h5v1h-5zM135 436h1v5h-1zM133 457h5v1h-5zM135 455h1v5h-1zM133 476h5v1h-5zM135 474h1v5h-1zM133 495h5v1h-5zM135 493h1v5h-1zM133 514h5v1h-5zM135 512h1v5h-1zM133 533h5v1h-5zM135 531h1v5h-1zM133 552h5v1h-5zM135 550h1v5h-1zM133 571h5v1h-5zM135 569h1v5h-1zM133 590h5v1h-5zM135 588h1v5h-1zM133 609h5v1h-5zM135 607h1v5h-1zM133 628h5v1h-5zM135 626h1v5h-1zM133 646h5v1h-5zM135 644h1v5h-1zM133 665h5v1h-5zM135 663h1v5h-1zM133 684h5v1h-5zM135 682h1v5h-1zM152 115h5v1h-5zM154 113h1v5h-1zM152 134h5v1h-5zM154 132h1v5h-1zM152 153h5v1h-5zM154 151h1v5h-1zM152 172h5v1h-5zM154 170h1v5h-1zM152 191h5v1h-5zM154 189h1v5h-1zM152 210h5v1h-5zM154 208h1v5h-1zM152 229h5v1h-5zM154 227h1v5h-1zM152 248h5v1h-5zM154 246h1v5h-1zM152 267h5v1h-5zM154 265h1v5h-1zM152 286h5v1h-5zM154 284h1v5h-1zM152 305h5v1h-5zM154 303h1v5h-1zM152 324h5v1h-5zM154 322h1v5h-1zM152 343h5v1h-5zM154 341h1v5h-1zM152 362h5v1h-5zM154 360h1v5h-1zM152 381h5v1h-5zM154 379h1v5h-1zM152 400h5v1h-5zM154 398h1v5h-1zM152 419h5v1h-5zM154 417h1v5h-1zM152 438h5v1h-5zM154 436h1v5h-1zM152 457h5v1h-5zM154 455h1v5h-1zM152 476h5v1h-5zM154 474h1v5h-1zM152 495h5v1h-5zM154 493h1v5h-1zM152 514h5v1h-5zM154 512h1v5h-1zM152 533h5v1h-5zM154 531h1v5h-1zM152 552h5v1h-5zM154 550h1v5h-1zM152 571h5v1h-5zM154 569h1v5h-1zM152 590h5v1h-5zM154 588h1v5h-1zM152 609h5v1h-5zM154 607h1v5h-1zM152 628h5v1h-5zM154 626h1v5h-1zM152 646h5v1h-5zM154 644h1v5h-1zM152 665h5v1h-5zM154 663h1v5h-1zM152 684h5v1h-5zM154 682h1v5h-1zM171 115h5v1h-5zM173 113h1v5h-1zM171 134h5v1h-5zM173 132h1v5h-1zM171 153h5v1h-5zM173 151h1v5h-1zM171 172h5v1h-5zM173 170h1v5h-1zM171 191h5v1h-5zM173 189h1v5h-1zM171 210h5v1h-5zM173 208h1v5h-1zM171 229h5v1h-5zM173 227h1v5h-1zM171 248h5v1h-5zM173 246h1v5h-1zM171 267h5v1h-5zM173 265h1v5h-1zM171 286h5v1h-5zM173 284h1v5h-1zM171 305h5v1h-5zM173 303h1v5h-1zM171 324h5v1h-5zM173 322h1v5h-1zM171 343h5v1h-5zM173 341h1v5h-1zM171 362h5v1h-5zM173 360h1v5h-1zM171 381h5v1h-5zM173 379h1v5h-1zM171 400h5v1h-5zM173 398h1v5h-1zM171 419h5v1h-5zM173 417h1v5h-1zM171 438h5v1h-5zM173 436h1v5h-1zM171 457h5v1h-5zM173 455h1v5h-1zM171 476h5v1h-5zM173 474h1v5h-1zM171 495h5v1h-5zM173 493h1v5h-1zM171 514h5v1h-5zM173 512h1v5h-1zM171 533h5v1h-5zM173 531h1v5h-1zM171 552h5v1h-5zM173 550h1v5h-1zM171 571h5v1h-5zM173 569h1v5h-1zM171 590h5v1h-5zM173 588h1v5h-1zM171 609h5v1h-5zM173 607h1v5h-1zM171 628h5v1h-5zM173 626h1v5h-1zM171 646h5v1h-5zM173 644h1v5h-1zM171 665h5v1h-5zM173 663h1v5h-1zM171 684h5v1h-5zM173 682h1v5h-1zM190 115h5v1h-5zM192 113h1v5h-1zM190 134h5v1h-5zM192 132h1v5h-1zM190 153h5v1h-5zM192 151h1v5h-1zM190 172h5v1h-5zM192 170h1v5h-1zM190 191h5v1h-5zM192 189h1v5h-1zM190 210h5v1h-5zM192 208h1v5h-1zM190 229h5v1h-5zM192 227h1v5h-1zM190 248h5v1h-5zM192 246h1v5h-1zM190 267h5v1h-5zM192 265h1v5h-1zM190 286h5v1h-5zM192 284h1v5h-1zM190 305h5v1h-5zM192 303h1v5h-1zM190 324h5v1h-5zM192 322h1v5h-1zM190 343h5v1h-5zM192 341h1v5h-1zM190 362h5v1h-5zM192 360h1v5h-1zM190 381h5v1h-5zM192 379h1v5h-1zM190 400h5v1h-5zM192 398h1v5h-1zM190 419h5v1h-5zM192 417h1v5h-1zM190 438h5v1h-5zM192 436h1v5h-1zM190 457h5v1h-5zM192 455h1v5h-1zM190 476h5v1h-5zM192 474h1v5h-1zM190 495h5v1h-5zM192 493h1v5h-1zM190 514h5v1h-5zM192 512h1v5h-1zM190 533h5v1h-5zM192 531h1v5h-1zM190 552h5v1h-5zM192 550h1v5h-1zM190 571h5v1h-5zM192 569h1v5h-1zM190 590h5v1h-5zM192 588h1v5h-1zM190 609h5v1h-5zM192 607h1v5h-1zM190 628h5v1h-5zM192 626h1v5h-1zM190 646h5v1h-5zM192 644h1v5h-1zM190 665h5v1h-5zM192 663h1v5h-1zM190 684h5v1h-5zM192 682h1v5h-1zM209 115h5v1h-5zM211 113h1v5h-1zM209 134h5v1h-5zM211 132h1v5h-1zM209 153h5v1h-5zM211 151h1v5h-1zM209 172h5v1h-5zM211 170h1v5h-1zM209 191h5v1h-5zM211 189h1v5h-1zM209 210h5v1h-5zM211 208h1v5h-1zM209 229h5v1h-5zM211 227h1v5h-1zM209 248h5v1h-5zM211 246h1v5h-1zM209 267h5v1h-5zM211 265h1v5h-1zM209 286h5v1h-5zM211 284h1v5h-1zM209 305h5v1h-5zM211 303h1v5h-1zM209 324h5v1h-5zM211 322h1v5h-1zM209 343h5v1h-5zM211 341h1v5h-1zM209 362h5v1h-5zM211 360h1v5h-1zM209 381h5v1h-5zM211 379h1v5h-1zM209 400h5v1h-5zM211 398h1v5h-1zM209 419h5v1h-5zM211 417h1v5h-1zM209 438h5v1h-5zM211 436h1v5h-1zM209 457h5v1h-5zM211 455h1v5h-1zM209 476h5v1h-5zM211 474h1v5h-1zM209 495h5v1h-5zM211 493h1v5h-1zM209 514h5v1h-5zM211 512h1v5h-1zM209 533h5v1h-5zM211 531h1v5h-1zM209 552h5v1h-5zM211 550h1v5h-1zM209 571h5v1h-5zM211 569h1v5h-1zM209 590h5v1h-5zM211 588h1v5h-1zM209 609h5v1h-5zM211 607h1v5h-1zM209 628h5v1h-5zM211 626h1v5h-1zM209 646h5v1h-5zM211 644h1v5h-1zM209 665h5v1h-5zM211 663h1v5h-1zM209 684h5v1h-5zM211 682h1v5h-1zM228 115h5v1h-5zM230 113h1v5h-1zM228 134h5v1h-5zM230 132h1v5h-1zM228 153h5v1h-5zM230 151h1v5h-1zM228 172h5v1h-5zM230 170h1v5h-1zM228 191h5v1h-5zM230 189h1v5h-1zM228 210h5v1h-5zM230 208h1v5h-1zM228 229h5v1h-5zM230 227h1v5h-1zM228 248h5v1h-5zM230 246h1v5h-1zM228 267h5v1h-5zM230 265h1v5h-1zM228 286h5v1h-5zM230 284h1v5h-1zM228 305h5v1h-5zM230 303h1v5h-1zM228 324h5v1h-5zM230 322h1v5h-1zM228 343h5v1h-5zM230 341h1v5h-1zM228 362h5v1h-5zM230 360h1v5h-1zM228 381h5v1h-5zM230 379h1v5h-1zM228 400h5v1h-5zM230 398h1v5h-1zM228 419h5v1h-5zM230 417h1v5h-1zM228 438h5v1h-5zM230 436h1v5h-1zM228 457h5v1h-5zM230 455h1v5h-1zM228 476h5v1h-5zM230 474h1v5h-1zM228 495h5v1h-5zM230 493h1v5h-1zM228 514h5v1h-5zM230 512h1v5h-1zM228 533h5v1h-5zM230 531h1v5h-1zM228 552h5v1h-5zM230 550h1v5h-1zM228 571h5v1h-5zM230 569h1v5h-1zM228 590h5v1h-5zM230 588h1v5h-1zM228 609h5v1h-5zM230 607h1v5h-1zM228 628h5v1h-5zM230 626h1v5h-1zM228 646h5v1h-5zM230 644h1v5h-1zM228 665h5v1h-5zM230 663h1v5h-1zM228 684h5v1h-5zM230 682h1v5h-1zM247 115h5v1h-5zM249 113h1v5h-1zM247 134h5v1h-5zM249 132h1v5h-1zM247 153h5v1h-5zM249 151h1v5h-1zM247 172h5v1h-5zM249 170h1v5h-1zM247 191h5v1h-5zM249 189h1v5h-1zM247 210h5v1h-5zM249 208h1v5h-1zM247 229h5v1h-5zM249 227h1v5h-1zM247 248h5v1h-5zM249 246h1v5h-1zM247 267h5v1h-5zM249 265h1v5h-1zM247 286h5v1h-5zM249 284h1v5h-1zM247 305h5v1h-5zM249 303h1v5h-1zM247 324h5v1h-5zM249 322h1v5h-1zM247 343h5v1h-5zM249 341h1v5h-1zM247 362h5v1h-5zM249 360h1v5h-1zM247 381h5v1h-5zM249 379h1v5h-1zM247 400h5v1h-5zM249 398h1v5h-1zM247 419h5v1h-5zM249 417h1v5h-1zM247 438h5v1h-5zM249 436h1v5h-1zM247 457h5v1h-5zM249 455h1v5h-1zM247 476h5v1h-5zM249 474h1v5h-1zM247 495h5v1h-5zM249 493h1v5h-1zM247 514h5v1h-5zM249 512h1v5h-1zM247 533h5v1h-5zM249 531h1v5h-1zM247 552h5v1h-5zM249 550h1v5h-1zM247 571h5v1h-5zM249 569h1v5h-1zM247 590h5v1h-5zM249 588h1v5h-1zM247 609h5v1h-5zM249 607h1v5h-1zM247 628h5v1h-5zM249 626h1v5h-1zM247 646h5v1h-5zM249 644h1v5h-1zM247 665h5v1h-5zM249 663h1v5h-1zM247 684h5v1h-5zM249 682h1v5h-1zM266 115h5v1h-5zM268 113h1v5h-1zM266 134h5v1h-5zM268 132h1v5h-1zM266 153h5v1h-5zM268 151h1v5h-1zM266 172h5v1h-5zM268 170h1v5h-1zM266 191h5v1h-5zM268 189h1v5h-1zM266 210h5v1h-5zM268 208h1v5h-1zM266 229h5v1h-5zM268 227h1v5h-1zM266 248h5v1h-5zM268 246h1v5h-1zM266 267h5v1h-5zM268 265h1v5h-1zM266 286h5v1h-5zM268 284h1v5h-1zM266 305h5v1h-5zM268 303h1v5h-1zM266 324h5v1h-5zM268 322h1v5h-1zM266 343h5v1h-5zM268 341h1v5h-1zM266 362h5v1h-5zM268 360h1v5h-1zM266 381h5v1h-5zM268 379h1v5h-1zM266 400h5v1h-5zM268 398h1v5h-1zM266 419h5v1h-5zM268 417h1v5h-1zM266 438h5v1h-5zM268 436h1v5h-1zM266 457h5v1h-5zM268 455h1v5h-1zM266 476h5v1h-5zM268 474h1v5h-1zM266 495h5v1h-5zM268 493h1v5h-1zM266 514h5v1h-5zM268 512h1v5h-1zM266 533h5v1h-5zM268 531h1v5h-1zM266 552h5v1h-5zM268 550h1v5h-1zM266 571h5v1h-5zM268 569h1v5h-1zM266 590h5v1h-5zM268 588h1v5h-1zM266 609h5v1h-5zM268 607h1v5h-1zM266 628h5v1h-5zM268 626h1v5h-1zM266 646h5v1h-5zM268 644h1v5h-1zM266 665h5v1h-5zM268 663h1v5h-1zM266 684h5v1h-5zM268 682h1v5h-1zM285 115h5v1h-5zM287 113h1v5h-1zM285 134h5v1h-5zM287 132h1v5h-1zM285 153h5v1h-5zM287 151h1v5h-1zM285 172h5v1h-5zM287 170h1v5h-1zM285 191h5v1h-5zM287 189h1v5h-1zM285 210h5v1h-5zM287 208h1v5h-1zM285 229h5v1h-5zM287 227h1v5h-1zM285 248h5v1h-5zM287 246h1v5h-1zM285 267h5v1h-5zM287 265h1v5h-1zM285 286h5v1h-5zM287 284h1v5h-1zM285 305h5v1h-5zM287 303h1v5h-1zM285 324h5v1h-5zM287 322h1v5h-1zM285 343h5v1h-5zM287 341h1v5h-1zM285 362h5v1h-5zM287 360h1v5h-1zM285 381h5v1h-5zM287 379h1v5h-1zM285 400h5v1h-5zM287 398h1v5h-1zM285 419h5v1h-5zM287 417h1v5h-1zM285 438h5v1h-5zM287 436h1v5h-1zM285 457h5v1h-5zM287 455h1v5h-1zM285 476h5v1h-5zM287 474h1v5h-1zM285 495h5v1h-5zM287 493h1v5h-1zM285 514h5v1h-5zM287 512h1v5h-1zM285 533h5v1h-5zM287 531h1v5h-1zM285 552h5v1h-5zM287 550h1v5h-1zM285 571h5v1h-5zM287 569h1v5h-1zM285 590h5v1h-5zM287 588h1v5h-1zM285 609h5v1h-5zM287 607h1v5h-1zM285 628h5v1h-5zM287 626h1v5h-1zM285 646h5v1h-5zM287 644h1v5h-1zM285 665h5v1h-5zM287 663h1v5h-1zM285 684h5v1h-5zM287 682h1v5h-1zM304 115h5v1h-5zM306 113h1v5h-1zM304 134h5v1h-5zM306 132h1v5h-1zM304 153h5v1h-5zM306 151h1v5h-1zM304 172h5v1h-5zM306 170h1v5h-1zM304 191h5v1h-5zM306 189h1v5h-1zM304 210h5v1h-5zM306 208h1v5h-1zM304 229h5v1h-5zM306 227h1v5h-1zM304 248h5v1h-5zM306 246h1v5h-1zM304 267h5v1h-5zM306 265h1v5h-1zM304 286h5v1h-5zM306 284h1v5h-1zM304 305h5v1h-5zM306 303h1v5h-1zM304 324h5v1h-5zM306 322h1v5h-1zM304 343h5v1h-5zM306 341h1v5h-1zM304 362h5v1h-5zM306 360h1v5h-1zM304 381h5v1h-5zM306 379h1v5h-1zM304 400h5v1h-5zM306 398h1v5h-1zM304 419h5v1h-5zM306 417h1v5h-1zM304 438h5v1h-5zM306 436h1v5h-1zM304 457h5v1h-5zM306 455h1v5h-1zM304 476h5v1h-5zM306 474h1v5h-1zM304 495h5v1h-5zM306 493h1v5h-1zM304 514h5v1h-5zM306 512h1v5h-1zM304 533h5v1h-5zM306 531h1v5h-1zM304 552h5v1h-5zM306 550h1v5h-1zM304 571h5v1h-5zM306 569h1v5h-1zM304 590h5v1h-5zM306 588h1v5h-1zM304 609h5v1h-5zM306 607h1v5h-1zM304 628h5v1h-5zM306 626h1v5h-1zM304 646h5v1h-5zM306 644h1v5h-1zM304 665h5v1h-5zM306 663h1v5h-1zM304 684h5v1h-5zM306 682h1v5h-1zM323 115h5v1h-5zM325 113h1v5h-1zM323 134h5v1h-5zM325 132h1v5h-1zM323 153h5v1h-5zM325 151h1v5h-1zM323 172h5v1h-5zM325 170h1v5h-1zM323 191h5v1h-5zM325 189h1v5h-1zM323 210h5v1h-5zM325 208h1v5h-1zM323 229h5v1h-5zM325 227h1v5h-1zM323 248h5v1h-5zM325 246h1v5h-1zM323 267h5v1h-5zM325 265h1v5h-1zM323 286h5v1h-5zM325 284h1v5h-1zM323 305h5v1h-5zM325 303h1v5h-1zM323 324h5v1h-5zM325 322h1v5h-1zM323 343h5v1h-5zM325 341h1v5h-1zM323 362h5v1h-5zM325 360h1v5h-1zM323 381h5v1h-5zM325 379h1v5h-1zM323 400h5v1h-5zM325 398h1v5h-1zM323 419h5v1h-5zM325 417h1v5h-1zM323 438h5v1h-5zM325 436h1v5h-1zM323 457h5v1h-5zM325 455h1v5h-1zM323 476h5v1h-5zM325 474h1v5h-1zM323 495h5v1h-5zM325 493h1v5h-1zM323 514h5v1h-5zM325 512h1v5h-1zM323 533h5v1h-5zM325 531h1v5h-1zM323 552h5v1h-5zM325 550h1v5h-1zM323 571h5v1h-5zM325 569h1v5h-1zM323 590h5v1h-5zM325 588h1v5h-1zM323 609h5v1h-5zM325 607h1v5h-1zM323 628h5v1h-5zM325 626h1v5h-1zM323 646h5v1h-5zM325 644h1v5h-1zM323 665h5v1h-5zM325 663h1v5h-1zM323 684h5v1h-5zM325 682h1v5h-1zM342 115h5v1h-5zM344 113h1v5h-1zM342 134h5v1h-5zM344 132h1v5h-1zM342 153h5v1h-5zM344 151h1v5h-1zM342 172h5v1h-5zM344 170h1v5h-1zM342 191h5v1h-5zM344 189h1v5h-1zM342 210h5v1h-5zM344 208h1v5h-1zM342 229h5v1h-5zM344 227h1v5h-1zM342 248h5v1h-5zM344 246h1v5h-1zM342 267h5v1h-5zM344 265h1v5h-1zM342 286h5v1h-5zM344 284h1v5h-1zM342 305h5v1h-5zM344 303h1v5h-1zM342 324h5v1h-5zM344 322h1v5h-1zM342 343h5v1h-5zM344 341h1v5h-1zM342 362h5v1h-5zM344 360h1v5h-1zM342 381h5v1h-5zM344 379h1v5h-1zM342 400h5v1h-5zM344 398h1v5h-1zM342 419h5v1h-5zM344 417h1v5h-1zM342 438h5v1h-5zM344 436h1v5h-1zM342 457h5v1h-5zM344 455h1v5h-1zM342 476h5v1h-5zM344 474h1v5h-1zM342 495h5v1h-5zM344 493h1v5h-1zM342 514h5v1h-5zM344 512h1v5h-1zM342 533h5v1h-5zM344 531h1v5h-1zM342 552h5v1h-5zM344 550h1v5h-1zM342 571h5v1h-5zM344 569h1v5h-1zM342 590h5v1h-5zM344 588h1v5h-1zM342 609h5v1h-5zM344 607h1v5h-1zM342 628h5v1h-5zM344 626h1v5h-1zM342 646h5v1h-5zM344 644h1v5h-1zM342 665h5v1h-5zM344 663h1v5h-1zM342 684h5v1h-5zM344 682h1v5h-1zM361 115h5v1h-5zM363 113h1v5h-1zM361 134h5v1h-5zM363 132h1v5h-1zM361 153h5v1h-5zM363 151h1v5h-1zM361 172h5v1h-5zM363 170h1v5h-1zM361 191h5v1h-5zM363 189h1v5h-1zM361 210h5v1h-5zM363 208h1v5h-1zM361 229h5v1h-5zM363 227h1v5h-1zM361 248h5v1h-5zM363 246h1v5h-1zM361 267h5v1h-5zM363 265h1v5h-1zM361 286h5v1h-5zM363 284h1v5h-1zM361 305h5v1h-5zM363 303h1v5h-1zM361 324h5v1h-5zM363 322h1v5h-1zM361 343h5v1h-5zM363 341h1v5h-1zM361 362h5v1h-5zM363 360h1v5h-1zM361 381h5v1h-5zM363 379h1v5h-1zM361 400h5v1h-5zM363 398h1v5h-1zM361 419h5v1h-5zM363 417h1v5h-1zM361 438h5v1h-5zM363 436h1v5h-1zM361 457h5v1h-5zM363 455h1v5h-1zM361 476h5v1h-5zM363 474h1v5h-1zM361 495h5v1h-5zM363 493h1v5h-1zM361 514h5v1h-5zM363 512h1v5h-1zM361 533h5v1h-5zM363 531h1v5h-1zM361 552h5v1h-5zM363 550h1v5h-1zM361 571h5v1h-5zM363 569h1v5h-1zM361 590h5v1h-5zM363 588h1v5h-1zM361 609h5v1h-5zM363 607h1v5h-1zM361 628h5v1h-5zM363 626h1v5h-1zM361 646h5v1h-5zM363 644h1v5h-1zM361 665h5v1h-5zM363 663h1v5h-1zM361 684h5v1h-5zM363 682h1v5h-1zM380 115h5v1h-5zM382 113h1v5h-1zM380 134h5v1h-5zM382 132h1v5h-1zM380 153h5v1h-5zM382 151h1v5h-1zM380 172h5v1h-5zM382 170h1v5h-1zM380 191h5v1h-5zM382 189h1v5h-1zM380 210h5v1h-5zM382 208h1v5h-1zM380 229h5v1h-5zM382 227h1v5h-1zM380 248h5v1h-5zM382 246h1v5h-1zM380 267h5v1h-5zM382 265h1v5h-1zM380 286h5v1h-5zM382 284h1v5h-1zM380 305h5v1h-5zM382 303h1v5h-1zM380 324h5v1h-5zM382 322h1v5h-1zM380 343h5v1h-5zM382 341h1v5h-1zM380 362h5v1h-5zM382 360h1v5h-1zM380 381h5v1h-5zM382 379h1v5h-1zM380 400h5v1h-5zM382 398h1v5h-1zM380 419h5v1h-5zM382 417h1v5h-1zM380 438h5v1h-5zM382 436h1v5h-1zM380 457h5v1h-5zM382 455h1v5h-1zM380 476h5v1h-5zM382 474h1v5h-1zM380 495h5v1h-5zM382 493h1v5h-1zM380 514h5v1h-5zM382 512h1v5h-1zM380 533h5v1h-5zM382 531h1v5h-1zM380 552h5v1h-5zM382 550h1v5h-1zM380 571h5v1h-5zM382 569h1v5h-1zM380 590h5v1h-5zM382 588h1v5h-1zM380 609h5v1h-5zM382 607h1v5h-1zM380 628h5v1h-5zM382 626h1v5h-1zM380 646h5v1h-5zM382 644h1v5h-1zM380 665h5v1h-5zM382 663h1v5h-1zM380 684h5v1h-5zM382 682h1v5h-1zM399 115h5v1h-5zM401 113h1v5h-1zM399 134h5v1h-5zM401 132h1v5h-1zM399 153h5v1h-5zM401 151h1v5h-1zM399 172h5v1h-5zM401 170h1v5h-1zM399 191h5v1h-5zM401 189h1v5h-1zM399 210h5v1h-5zM401 208h1v5h-1zM399 229h5v1h-5zM401 227h1v5h-1zM399 248h5v1h-5zM401 246h1v5h-1zM399 267h5v1h-5zM401 265h1v5h-1zM399 286h5v1h-5zM401 284h1v5h-1zM399 305h5v1h-5zM401 303h1v5h-1zM399 324h5v1h-5zM401 322h1v5h-1zM399 343h5v1h-5zM401 341h1v5h-1zM399 362h5v1h-5zM401 360h1v5h-1zM399 381h5v1h-5zM401 379h1v5h-1zM399 400h5v1h-5zM401 398h1v5h-1zM399 419h5v1h-5zM401 417h1v5h-1zM399 438h5v1h-5zM401 436h1v5h-1zM399 457h5v1h-5zM401 455h1v5h-1zM399 476h5v1h-5zM401 474h1v5h-1zM399 495h5v1h-5zM401 493h1v5h-1zM399 514h5v1h-5zM401 512h1v5h-1zM399 533h5v1h-5zM401 531h1v5h-1zM399 552h5v1h-5zM401 550h1v5h-1zM399 571h5v1h-5zM401 569h1v5h-1zM399 590h5v1h-5zM401 588h1v5h-1zM399 609h5v1h-5zM401 607h1v5h-1zM399 628h5v1h-5zM401 626h1v5h-1zM399 646h5v1h-5zM401 644h1v5h-1zM399 665h5v1h-5zM401 663h1v5h-1zM399 684h5v1h-5zM401 682h1v5h-1zM418 115h5v1h-5zM420 113h1v5h-1zM418 134h5v1h-5zM420 132h1v5h-1zM418 153h5v1h-5zM420 151h1v5h-1zM418 172h5v1h-5zM420 170h1v5h-1zM418 191h5v1h-5zM420 189h1v5h-1zM418 210h5v1h-5zM420 208h1v5h-1zM418 229h5v1h-5zM420 227h1v5h-1zM418 248h5v1h-5zM420 246h1v5h-1zM418 267h5v1h-5zM420 265h1v5h-1zM418 286h5v1h-5zM420 284h1v5h-1zM418 305h5v1h-5zM420 303h1v5h-1zM418 324h5v1h-5zM420 322h1v5h-1zM418 343h5v1h-5zM420 341h1v5h-1zM418 362h5v1h-5zM420 360h1v5h-1zM418 381h5v1h-5zM420 379h1v5h-1zM418 400h5v1h-5zM420 398h1v5h-1zM418 419h5v1h-5zM420 417h1v5h-1zM418 438h5v1h-5zM420 436h1v5h-1zM418 457h5v1h-5zM420 455h1v5h-1zM418 476h5v1h-5zM420 474h1v5h-1zM418 495h5v1h-5zM420 493h1v5h-1zM418 514h5v1h-5zM420 512h1v5h-1zM418 533h5v1h-5zM420 531h1v5h-1zM418 552h5v1h-5zM420 550h1v5h-1zM418 571h5v1h-5zM420 569h1v5h-1zM418 590h5v1h-5zM420 588h1v5h-1zM418 609h5v1h-5zM420 607h1v5h-1zM418 628h5v1h-5zM420 626h1v5h-1zM418 646h5v1h-5zM420 644h1v5h-1zM418 665h5v1h-5zM420 663h1v5h-1zM418 684h5v1h-5zM420 682h1v5h-1zM437 115h5v1h-5zM439 113h1v5h-1zM437 134h5v1h-5zM439 132h1v5h-1zM437 153h5v1h-5zM439 151h1v5h-1zM437 172h5v1h-5zM439 170h1v5h-1zM437 191h5v1h-5zM439 189h1v5h-1zM437 210h5v1h-5zM439 208h1v5h-1zM437 229h5v1h-5zM439 227h1v5h-1zM437 248h5v1h-5zM439 246h1v5h-1zM437 267h5v1h-5zM439 265h1v5h-1zM437 286h5v1h-5zM439 284h1v5h-1zM437 305h5v1h-5zM439 303h1v5h-1zM437 324h5v1h-5zM439 322h1v5h-1zM437 343h5v1h-5zM439 341h1v5h-1zM437 362h5v1h-5zM439 360h1v5h-1zM437 381h5v1h-5zM439 379h1v5h-1zM437 400h5v1h-5zM439 398h1v5h-1zM437 419h5v1h-5zM439 417h1v5h-1zM437 438h5v1h-5zM439 436h1v5h-1zM437 457h5v1h-5zM439 455h1v5h-1zM437 476h5v1h-5zM439 474h1v5h-1zM437 495h5v1h-5zM439 493h1v5h-1zM437 514h5v1h-5zM439 512h1v5h-1zM437 533h5v1h-5zM439 531h1v5h-1zM437 552h5v1h-5zM439 550h1v5h-1zM437 571h5v1h-5zM439 569h1v5h-1zM437 590h5v1h-5zM439 588h1v5h-1zM437 609h5v1h-5zM439 607h1v5h-1zM437 628h5v1h-5zM439 626h1v5h-1zM437 646h5v1h-5zM439 644h1v5h-1zM437 665h5v1h-5zM439 663h1v5h-1zM437 684h5v1h-5zM439 682h1v5h-1zM456 115h5v1h-5zM458 113h1v5h-1zM456 134h5v1h-5zM458 132h1v5h-1zM456 153h5v1h-5zM458 151h1v5h-1zM456 172h5v1h-5zM458 170h1v5h-1zM456 191h5v1h-5zM458 189h1v5h-1zM456 210h5v1h-5zM458 208h1v5h-1zM456 229h5v1h-5zM458 227h1v5h-1zM456 248h5v1h-5zM458 246h1v5h-1zM456 267h5v1h-5zM458 265h1v5h-1zM456 286h5v1h-5zM458 284h1v5h-1zM456 305h5v1h-5zM458 303h1v5h-1zM456 324h5v1h-5zM458 322h1v5h-1zM456 343h5v1h-5zM458 341h1v5h-1zM456 362h5v1h-5zM458 360h1v5h-1zM456 381h5v1h-5zM458 379h1v5h-1zM456 400h5v1h-5zM458 398h1v5h-1zM456 419h5v1h-5zM458 417h1v5h-1zM456 438h5v1h-5zM458 436h1v5h-1zM456 457h5v1h-5zM458 455h1v5h-1zM456 476h5v1h-5zM458 474h1v5h-1zM456 495h5v1h-5zM458 493h1v5h-1zM456 514h5v1h-5zM458 512h1v5h-1zM456 533h5v1h-5zM458 531h1v5h-1zM456 552h5v1h-5zM458 550h1v5h-1zM456 571h5v1h-5zM458 569h1v5h-1zM456 590h5v1h-5zM458 588h1v5h-1zM456 609h5v1h-5zM458 607h1v5h-1zM456 628h5v1h-5zM458 626h1v5h-1zM456 646h5v1h-5zM458 644h1v5h-1zM456 665h5v1h-5zM458 663h1v5h-1zM456 684h5v1h-5zM458 682h1v5h-1zM475 115h5v1h-5zM477 113h1v5h-1zM475 134h5v1h-5zM477 132h1v5h-1zM475 153h5v1h-5zM477 151h1v5h-1zM475 172h5v1h-5zM477 170h1v5h-1zM475 191h5v1h-5zM477 189h1v5h-1zM475 210h5v1h-5zM477 208h1v5h-1zM475 229h5v1h-5zM477 227h1v5h-1zM475 248h5v1h-5zM477 246h1v5h-1zM475 267h5v1h-5zM477 265h1v5h-1zM475 286h5v1h-5zM477 284h1v5h-1zM475 305h5v1h-5zM477 303h1v5h-1zM475 324h5v1h-5zM477 322h1v5h-1zM475 343h5v1h-5zM477 341h1v5h-1zM475 362h5v1h-5zM477 360h1v5h-1zM475 381h5v1h-5zM477 379h1v5h-1zM475 400h5v1h-5zM477 398h1v5h-1zM475 419h5v1h-5zM477 417h1v5h-1zM475 438h5v1h-5zM477 436h1v5h-1zM475 457h5v1h-5zM477 455h1v5h-1zM475 476h5v1h-5zM477 474h1v5h-1zM475 495h5v1h-5zM477 493h1v5h-1zM475 514h5v1h-5zM477 512h1v5h-1zM475 533h5v1h-5zM477 531h1v5h-1zM475 552h5v1h-5zM477 550h1v5h-1zM475 571h5v1h-5zM477 569h1v5h-1zM475 590h5v1h-5zM477 588h1v5h-1zM475 609h5v1h-5zM477 607h1v5h-1zM475 628h5v1h-5zM477 626h1v5h-1zM475 646h5v1h-5zM477 644h1v5h-1zM475 665h5v1h-5zM477 663h1v5h-1zM475 684h5v1h-5zM477 682h1v5h-1zM494 115h5v1h-5zM496 113h1v5h-1zM494 134h5v1h-5zM496 132h1v5h-1zM494 153h5v1h-5zM496 151h1v5h-1zM494 172h5v1h-5zM496 170h1v5h-1zM494 191h5v1h-5zM496 189h1v5h-1zM494 210h5v1h-5zM496 208h1v5h-1zM494 229h5v1h-5zM496 227h1v5h-1zM494 248h5v1h-5zM496 246h1v5h-1zM494 267h5v1h-5zM496 265h1v5h-1zM494 286h5v1h-5zM496 284h1v5h-1zM494 305h5v1h-5zM496 303h1v5h-1zM494 324h5v1h-5zM496 322h1v5h-1zM494 343h5v1h-5zM496 341h1v5h-1zM494 362h5v1h-5zM496 360h1v5h-1zM494 381h5v1h-5zM496 379h1v5h-1zM494 400h5v1h-5zM496 398h1v5h-1zM494 419h5v1h-5zM496 417h1v5h-1zM494 438h5v1h-5zM496 436h1v5h-1zM494 457h5v1h-5zM496 455h1v5h-1zM494 476h5v1h-5zM496 474h1v5h-1zM494 495h5v1h-5zM496 493h1v5h-1zM494 514h5v1h-5zM496 512h1v5h-1zM494 533h5v1h-5zM496 531h1v5h-1zM494 552h5v1h-5zM496 550h1v5h-1zM494 571h5v1h-5zM496 569h1v5h-1zM494 590h5v1h-5zM496 588h1v5h-1zM494 609h5v1h-5zM496 607h1v5h-1zM494 628h5v1h-5zM496 626h1v5h-1zM494 646h5v1h-5zM496 644h1v5h-1zM494 665h5v1h-5zM496 663h1v5h-1zM494 684h5v1h-5zM496 682h1v5h-1zM513 115h5v1h-5zM515 113h1v5h-1zM513 134h5v1h-5zM515 132h1v5h-1zM513 153h5v1h-5zM515 151h1v5h-1zM513 172h5v1h-5zM515 170h1v5h-1zM513 191h5v1h-5zM515 189h1v5h-1zM513 210h5v1h-5zM515 208h1v5h-1zM513 229h5v1h-5zM515 227h1v5h-1zM513 248h5v1h-5zM515 246h1v5h-1zM513 267h5v1h-5zM515 265h1v5h-1zM513 286h5v1h-5zM515 284h1v5h-1zM513 305h5v1h-5zM515 303h1v5h-1zM513 324h5v1h-5zM515 322h1v5h-1zM513 343h5v1h-5zM515 341h1v5h-1zM513 362h5v1h-5zM515 360h1v5h-1zM513 381h5v1h-5zM515 379h1v5h-1zM513 400h5v1h-5zM515 398h1v5h-1zM513 419h5v1h-5zM515 417h1v5h-1zM513 438h5v1h-5zM515 436h1v5h-1zM513 457h5v1h-5zM515 455h1v5h-1zM513 476h5v1h-5zM515 474h1v5h-1zM513 495h5v1h-5zM515 493h1v5h-1zM513 514h5v1h-5zM515 512h1v5h-1zM513 533h5v1h-5zM515 531h1v5h-1zM513 552h5v1h-5zM515 550h1v5h-1zM513 571h5v1h-5zM515 569h1v5h-1zM513 590h5v1h-5zM515 588h1v5h-1zM513 609h5v1h-5zM515 607h1v5h-1zM513 628h5v1h-5zM515 626h1v5h-1zM513 646h5v1h-5zM515 644h1v5h-1zM513 665h5v1h-5zM515 663h1v5h-1zM513 684h5v1h-5zM515 682h1v5h-1zM532 115h5v1h-5zM534 113h1v5h-1zM532 134h5v1h-5zM534 132h1v5h-1zM532 153h5v1h-5zM534 151h1v5h-1zM532 172h5v1h-5zM534 170h1v5h-1zM532 191h5v1h-5zM534 189h1v5h-1zM532 210h5v1h-5zM534 208h1v5h-1zM532 229h5v1h-5zM534 227h1v5h-1zM532 248h5v1h-5zM534 246h1v5h-1zM532 267h5v1h-5zM534 265h1v5h-1zM532 286h5v1h-5zM534 284h1v5h-1zM532 305h5v1h-5zM534 303h1v5h-1zM532 324h5v1h-5zM534 322h1v5h-1zM532 343h5v1h-5zM534 341h1v5h-1zM532 362h5v1h-5zM534 360h1v5h-1zM532 381h5v1h-5zM534 379h1v5h-1zM532 400h5v1h-5zM534 398h1v5h-1zM532 419h5v1h-5zM534 417h1v5h-1zM532 438h5v1h-5zM534 436h1v5h-1zM532 457h5v1h-5zM534 455h1v5h-1zM532 476h5v1h-5zM534 474h1v5h-1zM532 495h5v1h-5zM534 493h1v5h-1zM532 514h5v1h-5zM534 512h1v5h-1zM532 533h5v1h-5zM534 531h1v5h-1zM532 552h5v1h-5zM534 550h1v5h-1zM532 571h5v1h-5zM534 569h1v5h-1zM532 590h5v1h-5zM534 588h1v5h-1zM532 609h5v1h-5zM534 607h1v5h-1zM532 628h5v1h-5zM534 626h1v5h-1zM532 646h5v1h-5zM534 644h1v5h-1zM532 665h5v1h-5zM534 663h1v5h-1zM532 684h5v1h-5zM534 682h1v5h-1zM551 115h5v1h-5zM553 113h1v5h-1zM551 134h5v1h-5zM553 132h1v5h-1zM551 153h5v1h-5zM553 151h1v5h-1zM551 172h5v1h-5zM553 170h1v5h-1zM551 191h5v1h-5zM553 189h1v5h-1zM551 210h5v1h-5zM553 208h1v5h-1zM551 229h5v1h-5zM553 227h1v5h-1zM551 248h5v1h-5zM553 246h1v5h-1zM551 267h5v1h-5zM553 265h1v5h-1zM551 286h5v1h-5zM553 284h1v5h-1zM551 305h5v1h-5zM553 303h1v5h-1zM551 324h5v1h-5zM553 322h1v5h-1zM551 343h5v1h-5zM553 341h1v5h-1zM551 362h5v1h-5zM553 360h1v5h-1zM551 381h5v1h-5zM553 379h1v5h-1zM551 400h5v1h-5zM553 398h1v5h-1zM551 419h5v1h-5zM553 417h1v5h-1zM551 438h5v1h-5zM553 436h1v5h-1zM551 457h5v1h-5zM553 455h1v5h-1zM551 476h5v1h-5zM553 474h1v5h-1zM551 495h5v1h-5zM553 493h1v5h-1zM551 514h5v1h-5zM553 512h1v5h-1zM551 533h5v1h-5zM553 531h1v5h-1zM551 552h5v1h-5zM553 550h1v5h-1zM551 571h5v1h-5zM553 569h1v5h-1zM551 590h5v1h-5zM553 588h1v5h-1zM551 609h5v1h-5zM553 607h1v5h-1zM551 628h5v1h-5zM553 626h1v5h-1zM551 646h5v1h-5zM553 644h1v5h-1zM551 665h5v1h-5zM553 663h1v5h-1zM551 684h5v1h-5zM553 682h1v5h-1zM570 115h5v1h-5zM572 113h1v5h-1zM570 134h5v1h-5zM572 132h1v5h-1zM570 153h5v1h-5zM572 151h1v5h-1zM570 172h5v1h-5zM572 170h1v5h-1zM570 191h5v1h-5zM572 189h1v5h-1zM570 210h5v1h-5zM572 208h1v5h-1zM570 229h5v1h-5zM572 227h1v5h-1zM570 248h5v1h-5zM572 246h1v5h-1zM570 267h5v1h-5zM572 265h1v5h-1zM570 286h5v1h-5zM572 284h1v5h-1zM570 305h5v1h-5zM572 303h1v5h-1zM570 324h5v1h-5zM572 322h1v5h-1zM570 343h5v1h-5zM572 341h1v5h-1zM570 362h5v1h-5zM572 360h1v5h-1zM570 381h5v1h-5zM572 379h1v5h-1zM570 400h5v1h-5zM572 398h1v5h-1zM570 419h5v1h-5zM572 417h1v5h-1zM570 438h5v1h-5zM572 436h1v5h-1zM570 457h5v1h-5zM572 455h1v5h-1zM570 476h5v1h-5zM572 474h1v5h-1zM570 495h5v1h-5zM572 493h1v5h-1zM570 514h5v1h-5zM572 512h1v5h-1zM570 533h5v1h-5zM572 531h1v5h-1zM570 552h5v1h-5zM572 550h1v5h-1zM570 571h5v1h-5zM572 569h1v5h-1zM570 590h5v1h-5zM572 588h1v5h-1zM570 609h5v1h-5zM572 607h1v5h-1zM570 628h5v1h-5zM572 626h1v5h-1zM570 646h5v1h-5zM572 644h1v5h-1zM570 665h5v1h-5zM572 663h1v5h-1zM570 684h5v1h-5zM572 682h1v5h-1zM589 115h5v1h-5zM591 113h1v5h-1zM589 134h5v1h-5zM591 132h1v5h-1zM589 153h5v1h-5zM591 151h1v5h-1zM589 172h5v1h-5zM591 170h1v5h-1zM589 191h5v1h-5zM591 189h1v5h-1zM589 210h5v1h-5zM591 208h1v5h-1zM589 229h5v1h-5zM591 227h1v5h-1zM589 248h5v1h-5zM591 246h1v5h-1zM589 267h5v1h-5zM591 265h1v5h-1zM589 286h5v1h-5zM591 284h1v5h-1zM589 305h5v1h-5zM591 303h1v5h-1zM589 324h5v1h-5zM591 322h1v5h-1zM589 343h5v1h-5zM591 341h1v5h-1zM589 362h5v1h-5zM591 360h1v5h-1zM589 381h5v1h-5zM591 379h1v5h-1zM589 400h5v1h-5zM591 398h1v5h-1zM589 419h5v1h-5zM591 417h1v5h-1zM589 438h5v1h-5zM591 436h1v5h-1zM589 457h5v1h-5zM591 455h1v5h-1zM589 476h5v1h-5zM591 474h1v5h-1zM589 495h5v1h-5zM591 493h1v5h-1zM589 514h5v1h-5zM591 512h1v5h-1zM589 533h5v1h-5zM591 531h1v5h-1zM589 552h5v1h-5zM591 550h1v5h-1zM589 571h5v1h-5zM591 569h1v5h-1zM589 590h5v1h-5zM591 588h1v5h-1zM589 609h5v1h-5zM591 607h1v5h-1zM589 628h5v1h-5zM591 626h1v5h-1zM589 646h5v1h-5zM591 644h1v5h-1zM589 665h5v1h-5zM591 663h1v5h-1zM589 684h5v1h-5zM591 682h1v5h-1zM608 115h5v1h-5zM610 113h1v5h-1zM608 134h5v1h-5zM610 132h1v5h-1zM608 153h5v1h-5zM610 151h1v5h-1zM608 172h5v1h-5zM610 170h1v5h-1zM608 191h5v1h-5zM610 189h1v5h-1zM608 210h5v1h-5zM610 208h1v5h-1zM608 229h5v1h-5zM610 227h1v5h-1zM608 248h5v1h-5zM610 246h1v5h-1zM608 267h5v1h-5zM610 265h1v5h-1zM608 286h5v1h-5zM610 284h1v5h-1zM608 305h5v1h-5zM610 303h1v5h-1zM608 324h5v1h-5zM610 322h1v5h-1zM608 343h5v1h-5zM610 341h1v5h-1zM608 362h5v1h-5zM610 360h1v5h-1zM608 381h5v1h-5zM610 379h1v5h-1zM608 400h5v1h-5zM610 398h1v5h-1zM608 419h5v1h-5zM610 417h1v5h-1zM608 438h5v1h-5zM610 436h1v5h-1zM608 457h5v1h-5zM610 455h1v5h-1zM608 476h5v1h-5zM610 474h1v5h-1zM608 495h5v1h-5zM610 493h1v5h-1zM608 514h5v1h-5zM610 512h1v5h-1zM608 533h5v1h-5zM610 531h1v5h-1zM608 552h5v1h-5zM610 550h1v5h-1zM608 571h5v1h-5zM610 569h1v5h-1zM608 590h5v1h-5zM610 588h1v5h-1zM608 609h5v1h-5zM610 607h1v5h-1zM608 628h5v1h-5zM610 626h1v5h-1zM608 646h5v1h-5zM610 644h1v5h-1zM608 665h5v1h-5zM610 663h1v5h-1zM608 684h5v1h-5zM610 682h1v5h-1zM627 115h5v1h-5zM629 113h1v5h-1zM627 134h5v1h-5zM629 132h1v5h-1zM627 153h5v1h-5zM629 151h1v5h-1zM627 172h5v1h-5zM629 170h1v5h-1zM627 191h5v1h-5zM629 189h1v5h-1zM627 210h5v1h-5zM629 208h1v5h-1zM627 229h5v1h-5zM629 227h1v5h-1zM627 248h5v1h-5zM629 246h1v5h-1zM627 267h5v1h-5zM629 265h1v5h-1zM627 286h5v1h-5zM629 284h1v5h-1zM627 305h5v1h-5zM629 303h1v5h-1zM627 324h5v1h-5zM629 322h1v5h-1zM627 343h5v1h-5zM629 341h1v5h-1zM627 362h5v1h-5zM629 360h1v5h-1zM627 381h5v1h-5zM629 379h1v5h-1zM627 400h5v1h-5zM629 398h1v5h-1zM627 419h5v1h-5zM629 417h1v5h-1zM627 438h5v1h-5zM629 436h1v5h-1zM627 457h5v1h-5zM629 455h1v5h-1zM627 476h5v1h-5zM629 474h1v5h-1zM627 495h5v1h-5zM629 493h1v5h-1zM627 514h5v1h-5zM629 512h1v5h-1zM627 533h5v1h-5zM629 531h1v5h-1zM627 552h5v1h-5zM629 550h1v5h-1zM627 571h5v1h-5zM629 569h1v5h-1zM627 590h5v1h-5zM629 588h1v5h-1zM627 609h5v1h-5zM629 607h1v5h-1zM627 628h5v1h-5zM629 626h1v5h-1zM627 646h5v1h-5zM629 644h1v5h-1zM627 665h5v1h-5zM629 663h1v5h-1zM627 684h5v1h-5zM629 682h1v5h-1zM646 115h5v1h-5zM648 113h1v5h-1zM646 134h5v1h-5zM648 132h1v5h-1zM646 153h5v1h-5zM648 151h1v5h-1zM646 172h5v1h-5zM648 170h1v5h-1zM646 191h5v1h-5zM648 189h1v5h-1zM646 210h5v1h-5zM648 208h1v5h-1zM646 229h5v1h-5zM648 227h1v5h-1zM646 248h5v1h-5zM648 246h1v5h-1zM646 267h5v1h-5zM648 265h1v5h-1zM646 286h5v1h-5zM648 284h1v5h-1zM646 305h5v1h-5zM648 303h1v5h-1zM646 324h5v1h-5zM648 322h1v5h-1zM646 343h5v1h-5zM648 341h1v5h-1zM646 362h5v1h-5zM648 360h1v5h-1zM646 381h5v1h-5zM648 379h1v5h-1zM646 400h5v1h-5zM648 398h1v5h-1zM646 419h5v1h-5zM648 417h1v5h-1zM646 438h5v1h-5zM648 436h1v5h-1zM646 457h5v1h-5zM648 455h1v5h-1zM646 476h5v1h-5zM648 474h1v5h-1zM646 495h5v1h-5zM648 493h1v5h-1zM646 514h5v1h-5zM648 512h1v5h-1zM646 533h5v1h-5zM648 531h1v5h-1zM646 552h5v1h-5zM648 550h1v5h-1zM646 571h5v1h-5zM648 569h1v5h-1zM646 590h5v1h-5zM648 588h1v5h-1zM646 609h5v1h-5zM648 607h1v5h-1zM646 628h5v1h-5zM648 626h1v5h-1zM646 646h5v1h-5zM648 644h1v5h-1zM646 665h5v1h-5zM648 663h1v5h-1zM646 684h5v1h-5zM648 682h1v5h-1zM665 115h5v1h-5zM667 113h1v5h-1zM665 134h5v1h-5zM667 132h1v5h-1zM665 153h5v1h-5zM667 151h1v5h-1zM665 172h5v1h-5zM667 170h1v5h-1zM665 191h5v1h-5zM667 189h1v5h-1zM665 210h5v1h-5zM667 208h1v5h-1zM665 229h5v1h-5zM667 227h1v5h-1zM665 248h5v1h-5zM667 246h1v5h-1zM665 267h5v1h-5zM667 265h1v5h-1zM665 286h5v1h-5zM667 284h1v5h-1zM665 305h5v1h-5zM667 303h1v5h-1zM665 324h5v1h-5zM667 322h1v5h-1zM665 343h5v1h-5zM667 341h1v5h-1zM665 362h5v1h-5zM667 360h1v5h-1zM665 381h5v1h-5zM667 379h1v5h-1zM665 400h5v1h-5zM667 398h1v5h-1zM665 419h5v1h-5zM667 417h1v5h-1zM665 438h5v1h-5zM667 436h1v5h-1zM665 457h5v1h-5zM667 455h1v5h-1zM665 476h5v1h-5zM667 474h1v5h-1zM665 495h5v1h-5zM667 493h1v5h-1zM665 514h5v1h-5zM667 512h1v5h-1zM665 533h5v1h-5zM667 531h1v5h-1zM665 552h5v1h-5zM667 550h1v5h-1zM665 571h5v1h-5zM667 569h1v5h-1zM665 590h5v1h-5zM667 588h1v5h-1zM665 609h5v1h-5zM667 607h1v5h-1zM665 628h5v1h-5zM667 626h1v5h-1zM665 646h5v1h-5zM667 644h1v5h-1zM665 665h5v1h-5zM667 663h1v5h-1zM665 684h5v1h-5zM667 682h1v5h-1zM684 115h5v1h-5zM686 113h1v5h-1zM684 134h5v1h-5zM686 132h1v5h-1zM684 153h5v1h-5zM686 151h1v5h-1zM684 172h5v1h-5zM686 170h1v5h-1zM684 191h5v1h-5zM686 189h1v5h-1zM684 210h5v1h-5zM686 208h1v5h-1zM684 229h5v1h-5zM686 227h1v5h-1zM684 248h5v1h-5zM686 246h1v5h-1zM684 267h5v1h-5zM686 265h1v5h-1zM684 286h5v1h-5zM686 284h1v5h-1zM684 305h5v1h-5zM686 303h1v5h-1zM684 324h5v1h-5zM686 322h1v5h-1zM684 343h5v1h-5zM686 341h1v5h-1zM684 362h5v1h-5zM686 360h1v5h-1zM684 381h5v1h-5zM686 379h1v5h-1zM684 400h5v1h-5zM686 398h1v5h-1zM684 419h5v1h-5zM686 417h1v5h-1zM684 438h5v1h-5zM686 436h1v5h-1zM684 457h5v1h-5zM686 455h1v5h-1zM684 476h5v1h-5zM686 474h1v5h-1zM684 495h5v1h-5zM686 493h1v5h-1zM684 514h5v1h-5zM686 512h1v5h-1zM684 533h5v1h-5zM686 531h1v5h-1zM684 552h5v1h-5zM686 550h1v5h-1zM684 571h5v1h-5zM686 569h1v5h-1zM684 590h5v1h-5zM686 588h1v5h-1zM684 609h5v1h-5zM686 607h1v5h-1zM684 628h5v1h-5zM686 626h1v5h-1zM684 646h5v1h-5zM686 644h1v5h-1zM684 665h5v1h-5zM686 663h1v5h-1zM684 684h5v1h-5zM686 682h1v5h-1zM703 115h5v1h-5zM705 113h1v5h-1zM703 134h5v1h-5zM705 132h1v5h-1zM703 153h5v1h-5zM705 151h1v5h-1zM703 172h5v1h-5zM705 170h1v5h-1zM703 191h5v1h-5zM705 189h1v5h-1zM703 210h5v1h-5zM705 208h1v5h-1zM703 229h5v1h-5zM705 227h1v5h-1zM703 248h5v1h-5zM705 246h1v5h-1zM703 267h5v1h-5zM705 265h1v5h-1zM703 286h5v1h-5zM705 284h1v5h-1zM703 305h5v1h-5zM705 303h1v5h-1zM703 324h5v1h-5zM705 322h1v5h-1zM703 343h5v1h-5zM705 341h1v5h-1zM703 362h5v1h-5zM705 360h1v5h-1zM703 381h5v1h-5zM705 379h1v5h-1zM703 400h5v1h-5zM705 398h1v5h-1zM703 419h5v1h-5zM705 417h1v5h-1zM703 438h5v1h-5zM705 436h1v5h-1zM703 457h5v1h-5zM705 455h1v5h-1zM703 476h5v1h-5zM705 474h1v5h-1zM703 495h5v1h-5zM705 493h1v5h-1zM703 514h5v1h-5zM705 512h1v5h-1zM703 533h5v1h-5zM705 531h1v5h-1zM703 552h5v1h-5zM705 550h1v5h-1zM703 571h5v1h-5zM705 569h1v5h-1zM703 590h5v1h-5zM705 588h1v5h-1zM703 609h5v1h-5zM705 607h1v5h-1zM703 628h5v1h-5zM705 626h1v5h-1zM703 646h5v1h-5zM705 644h1v5h-1zM703 665h5v1h-5zM705 663h1v5h-1zM703 684h5v1h-5zM705 682h1v5h-1zM722 115h5v1h-5zM724 113h1v5h-1zM722 134h5v1h-5zM724 132h1v5h-1zM722 153h5v1h-5zM724 151h1v5h-1zM722 172h5v1h-5zM724 170h1v5h-1zM722 191h5v1h-5zM724 189h1v5h-1zM722 210h5v1h-5zM724 208h1v5h-1zM722 229h5v1h-5zM724 227h1v5h-1zM722 248h5v1h-5zM724 246h1v5h-1zM722 267h5v1h-5zM724 265h1v5h-1zM722 286h5v1h-5zM724 284h1v5h-1zM722 305h5v1h-5zM724 303h1v5h-1zM722 324h5v1h-5zM724 322h1v5h-1zM722 343h5v1h-5zM724 341h1v5h-1zM722 362h5v1h-5zM724 360h1v5h-1zM722 381h5v1h-5zM724 379h1v5h-1zM722 400h5v1h-5zM724 398h1v5h-1zM722 419h5v1h-5zM724 417h1v5h-1zM722 438h5v1h-5zM724 436h1v5h-1zM722 457h5v1h-5zM724 455h1v5h-1zM722 476h5v1h-5zM724 474h1v5h-1zM722 495h5v1h-5zM724 493h1v5h-1zM722 514h5v1h-5zM724 512h1v5h-1zM722 533h5v1h-5zM724 531h1v5h-1zM722 552h5v1h-5zM724 550h1v5h-1zM722 571h5v1h-5zM724 569h1v5h-1zM722 590h5v1h-5zM724 588h1v5h-1zM722 609h5v1h-5zM724 607h1v5h-1zM722 628h5v1h-5zM724 626h1v5h-1zM722 646h5v1h-5zM724 644h1v5h-1zM722 665h5v1h-5zM724 663h1v5h-1zM722 684h5v1h-5zM724 682h1v5h-1zM741 115h5v1h-5zM743 113h1v5h-1zM741 134h5v1h-5zM743 132h1v5h-1zM741 153h5v1h-5zM743 151h1v5h-1zM741 172h5v1h-5zM743 170h1v5h-1zM741 191h5v1h-5zM743 189h1v5h-1zM741 210h5v1h-5zM743 208h1v5h-1zM741 229h5v1h-5zM743 227h1v5h-1zM741 248h5v1h-5zM743 246h1v5h-1zM741 267h5v1h-5zM743 265h1v5h-1zM741 286h5v1h-5zM743 284h1v5h-1zM741 305h5v1h-5zM743 303h1v5h-1zM741 324h5v1h-5zM743 322h1v5h-1zM741 343h5v1h-5zM743 341h1v5h-1zM741 362h5v1h-5zM743 360h1v5h-1zM741 381h5v1h-5zM743 379h1v5h-1zM741 400h5v1h-5zM743 398h1v5h-1zM741 419h5v1h-5zM743 417h1v5h-1zM741 438h5v1h-5zM743 436h1v5h-1zM741 457h5v1h-5zM743 455h1v5h-1zM741 476h5v1h-5zM743 474h1v5h-1zM741 495h5v1h-5zM743 493h1v5h-1zM741 514h5v1h-5zM743 512h1v5h-1zM741 533h5v1h-5zM743 531h1v5h-1zM741 552h5v1h-5zM743 550h1v5h-1zM741 571h5v1h-5zM743 569h1v5h-1zM741 590h5v1h-5zM743 588h1v5h-1zM741 609h5v1h-5zM743 607h1v5h-1zM741 628h5v1h-5zM743 626h1v5h-1zM741 646h5v1h-5zM743 644h1v5h-1zM741 665h5v1h-5zM743 663h1v5h-1zM741 684h5v1h-5zM743 682h1v5h-1zM760 115h5v1h-5zM762 113h1v5h-1zM760 134h5v1h-5zM762 132h1v5h-1zM760 153h5v1h-5zM762 151h1v5h-1zM760 172h5v1h-5zM762 170h1v5h-1zM760 191h5v1h-5zM762 189h1v5h-1zM760 210h5v1h-5zM762 208h1v5h-1zM760 229h5v1h-5zM762 227h1v5h-1zM760 248h5v1h-5zM762 246h1v5h-1zM760 267h5v1h-5zM762 265h1v5h-1zM760 286h5v1h-5zM762 284h1v5h-1zM760 305h5v1h-5zM762 303h1v5h-1zM760 324h5v1h-5zM762 322h1v5h-1zM760 343h5v1h-5zM762 341h1v5h-1zM760 362h5v1h-5zM762 360h1v5h-1zM760 381h5v1h-5zM762 379h1v5h-1zM760 400h5v1h-5zM762 398h1v5h-1zM760 419h5v1h-5zM762 417h1v5h-1zM760 438h5v1h-5zM762 436h1v5h-1zM760 457h5v1h-5zM762 455h1v5h-1zM760 476h5v1h-5zM762 474h1v5h-1zM760 495h5v1h-5zM762 493h1v5h-1zM760 514h5v1h-5zM762 512h1v5h-1zM760 533h5v1h-5zM762 531h1v5h-1zM760 552h5v1h-5zM762 550h1v5h-1zM760 571h5v1h-5zM762 569h1v5h-1zM760 590h5v1h-5zM762 588h1v5h-1zM760 609h5v1h-5zM762 607h1v5h-1zM760 628h5v1h-5zM762 626h1v5h-1zM760 646h5v1h-5zM762 644h1v5h-1zM760 665h5v1h-5zM762 663h1v5h-1zM760 684h5v1h-5zM762 682h1v5h-1zM779 115h5v1h-5zM781 113h1v5h-1zM779 134h5v1h-5zM781 132h1v5h-1zM779 153h5v1h-5zM781 151h1v5h-1zM779 172h5v1h-5zM781 170h1v5h-1zM779 191h5v1h-5zM781 189h1v5h-1zM779 210h5v1h-5zM781 208h1v5h-1zM779 229h5v1h-5zM781 227h1v5h-1zM779 248h5v1h-5zM781 246h1v5h-1zM779 267h5v1h-5zM781 265h1v5h-1zM779 286h5v1h-5zM781 284h1v5h-1zM779 305h5v1h-5zM781 303h1v5h-1zM779 324h5v1h-5zM781 322h1v5h-1zM779 343h5v1h-5zM781 341h1v5h-1zM779 362h5v1h-5zM781 360h1v5h-1zM779 381h5v1h-5zM781 379h1v5h-1zM779 400h5v1h-5zM781 398h1v5h-1zM779 419h5v1h-5zM781 417h1v5h-1zM779 438h5v1h-5zM781 436h1v5h-1zM779 457h5v1h-5zM781 455h1v5h-1zM779 476h5v1h-5zM781 474h1v5h-1zM779 495h5v1h-5zM781 493h1v5h-1zM779 514h5v1h-5zM781 512h1v5h-1zM779 533h5v1h-5zM781 531h1v5h-1zM779 552h5v1h-5zM781 550h1v5h-1zM779 571h5v1h-5zM781 569h1v5h-1zM779 590h5v1h-5zM781 588h1v5h-1zM779 609h5v1h-5zM781 607h1v5h-1zM779 628h5v1h-5zM781 626h1v5h-1zM779 646h5v1h-5zM781 644h1v5h-1zM779 665h5v1h-5zM781 663h1v5h-1zM779 684h5v1h-5zM781 682h1v5h-1zM798 115h5v1h-5zM800 113h1v5h-1zM798 134h5v1h-5zM800 132h1v5h-1zM798 153h5v1h-5zM800 151h1v5h-1zM798 172h5v1h-5zM800 170h1v5h-1zM798 191h5v1h-5zM800 189h1v5h-1zM798 210h5v1h-5zM800 208h1v5h-1zM798 229h5v1h-5zM800 227h1v5h-1zM798 248h5v1h-5zM800 246h1v5h-1zM798 267h5v1h-5zM800 265h1v5h-1zM798 286h5v1h-5zM800 284h1v5h-1zM798 305h5v1h-5zM800 303h1v5h-1zM798 324h5v1h-5zM800 322h1v5h-1zM798 343h5v1h-5zM800 341h1v5h-1zM798 362h5v1h-5zM800 360h1v5h-1zM798 381h5v1h-5zM800 379h1v5h-1zM798 400h5v1h-5zM800 398h1v5h-1zM798 419h5v1h-5zM800 417h1v5h-1zM798 438h5v1h-5zM800 436h1v5h-1zM798 457h5v1h-5zM800 455h1v5h-1zM798 476h5v1h-5zM800 474h1v5h-1zM798 495h5v1h-5zM800 493h1v5h-1zM798 514h5v1h-5zM800 512h1v5h-1zM798 533h5v1h-5zM800 531h1v5h-1zM798 552h5v1h-5zM800 550h1v5h-1zM798 571h5v1h-5zM800 569h1v5h-1zM798 590h5v1h-5zM800 588h1v5h-1zM798 609h5v1h-5zM800 607h1v5h-1zM798 628h5v1h-5zM800 626h1v5h-1zM798 646h5v1h-5zM800 644h1v5h-1zM798 665h5v1h-5zM800 663h1v5h-1zM798 684h5v1h-5zM800 682h1v5h-1zM817 115h5v1h-5zM819 113h1v5h-1zM817 134h5v1h-5zM819 132h1v5h-1zM817 153h5v1h-5zM819 151h1v5h-1zM817 172h5v1h-5zM819 170h1v5h-1zM817 191h5v1h-5zM819 189h1v5h-1zM817 210h5v1h-5zM819 208h1v5h-1zM817 229h5v1h-5zM819 227h1v5h-1zM817 248h5v1h-5zM819 246h1v5h-1zM817 267h5v1h-5zM819 265h1v5h-1zM817 286h5v1h-5zM819 284h1v5h-1zM817 305h5v1h-5zM819 303h1v5h-1zM817 324h5v1h-5zM819 322h1v5h-1zM817 343h5v1h-5zM819 341h1v5h-1zM817 362h5v1h-5zM819 360h1v5h-1zM817 381h5v1h-5zM819 379h1v5h-1zM817 400h5v1h-5zM819 398h1v5h-1zM817 419h5v1h-5zM819 417h1v5h-1zM817 438h5v1h-5zM819 436h1v5h-1zM817 457h5v1h-5zM819 455h1v5h-1zM817 476h5v1h-5zM819 474h1v5h-1zM817 495h5v1h-5zM819 493h1v5h-1zM817 514h5v1h-5zM819 512h1v5h-1zM817 533h5v1h-5zM819 531h1v5h-1zM817 552h5v1h-5zM819 550h1v5h-1zM817 571h5v1h-5zM819 569h1v5h-1zM817 590h5v1h-5zM819 588h1v5h-1zM817 609h5v1h-5zM819 607h1v5h-1zM817 628h5v1h-5zM819 626h1v5h-1zM817 646h5v1h-5zM819 644h1v5h-1zM817 665h5v1h-5zM819 663h1v5h-1zM817 684h5v1h-5zM819 682h1v5h-1zM836 115h5v1h-5zM838 113h1v5h-1zM836 134h5v1h-5zM838 132h1v5h-1zM836 153h5v1h-5zM838 151h1v5h-1zM836 172h5v1h-5zM838 170h1v5h-1zM836 191h5v1h-5zM838 189h1v5h-1zM836 210h5v1h-5zM838 208h1v5h-1zM836 229h5v1h-5zM838 227h1v5h-1zM836 248h5v1h-5zM838 246h1v5h-1zM836 267h5v1h-5zM838 265h1v5h-1zM836 286h5v1h-5zM838 284h1v5h-1zM836 305h5v1h-5zM838 303h1v5h-1zM836 324h5v1h-5zM838 322h1v5h-1zM836 343h5v1h-5zM838 341h1v5h-1zM836 362h5v1h-5zM838 360h1v5h-1zM836 381h5v1h-5zM838 379h1v5h-1zM836 400h5v1h-5zM838 398h1v5h-1zM836 419h5v1h-5zM838 417h1v5h-1zM836 438h5v1h-5zM838 436h1v5h-1zM836 457h5v1h-5zM838 455h1v5h-1zM836 476h5v1h-5zM838 474h1v5h-1zM836 495h5v1h-5zM838 493h1v5h-1zM836 514h5v1h-5zM838 512h1v5h-1zM836 533h5v1h-5zM838 531h1v5h-1zM836 552h5v1h-5zM838 550h1v5h-1zM836 571h5v1h-5zM838 569h1v5h-1zM836 590h5v1h-5zM838 588h1v5h-1zM836 609h5v1h-5zM838 607h1v5h-1zM836 628h5v1h-5zM838 626h1v5h-1zM836 646h5v1h-5zM838 644h1v5h-1zM836 665h5v1h-5zM838 663h1v5h-1zM836 684h5v1h-5zM838 682h1v5h-1zM855 115h5v1h-5zM857 113h1v5h-1zM855 134h5v1h-5zM857 132h1v5h-1zM855 153h5v1h-5zM857 151h1v5h-1zM855 172h5v1h-5zM857 170h1v5h-1zM855 191h5v1h-5zM857 189h1v5h-1zM855 210h5v1h-5zM857 208h1v5h-1zM855 229h5v1h-5zM857 227h1v5h-1zM855 248h5v1h-5zM857 246h1v5h-1zM855 267h5v1h-5zM857 265h1v5h-1zM855 286h5v1h-5zM857 284h1v5h-1zM855 305h5v1h-5zM857 303h1v5h-1zM855 324h5v1h-5zM857 322h1v5h-1zM855 343h5v1h-5zM857 341h1v5h-1zM855 362h5v1h-5zM857 360h1v5h-1zM855 381h5v1h-5zM857 379h1v5h-1zM855 400h5v1h-5zM857 398h1v5h-1zM855 419h5v1h-5zM857 417h1v5h-1zM855 438h5v1h-5zM857 436h1v5h-1zM855 457h5v1h-5zM857 455h1v5h-1zM855 476h5v1h-5zM857 474h1v5h-1zM855 495h5v1h-5zM857 493h1v5h-1zM855 514h5v1h-5zM857 512h1v5h-1zM855 533h5v1h-5zM857 531h1v5h-1zM855 552h5v1h-5zM857 550h1v5h-1zM855 571h5v1h-5zM857 569h1v5h-1zM855 590h5v1h-5zM857 588h1v5h-1zM855 609h5v1h-5zM857 607h1v5h-1zM855 628h5v1h-5zM857 626h1v5h-1zM855 646h5v1h-5zM857 644h1v5h-1zM855 665h5v1h-5zM857 663h1v5h-1zM855 684h5v1h-5zM857 682h1v5h-1zM874 115h5v1h-5zM876 113h1v5h-1zM874 134h5v1h-5zM876 132h1v5h-1zM874 153h5v1h-5zM876 151h1v5h-1zM874 172h5v1h-5zM876 170h1v5h-1zM874 191h5v1h-5zM876 189h1v5h-1zM874 210h5v1h-5zM876 208h1v5h-1zM874 229h5v1h-5zM876 227h1v5h-1zM874 248h5v1h-5zM876 246h1v5h-1zM874 267h5v1h-5zM876 265h1v5h-1zM874 286h5v1h-5zM876 284h1v5h-1zM874 305h5v1h-5zM876 303h1v5h-1zM874 324h5v1h-5zM876 322h1v5h-1zM874 343h5v1h-5zM876 341h1v5h-1zM874 362h5v1h-5zM876 360h1v5h-1zM874 381h5v1h-5zM876 379h1v5h-1zM874 400h5v1h-5zM876 398h1v5h-1zM874 419h5v1h-5zM876 417h1v5h-1zM874 438h5v1h-5zM876 436h1v5h-1zM874 457h5v1h-5zM876 455h1v5h-1zM874 476h5v1h-5zM876 474h1v5h-1zM874 495h5v1h-5zM876 493h1v5h-1zM874 514h5v1h-5zM876 512h1v5h-1zM874 533h5v1h-5zM876 531h1v5h-1zM874 552h5v1h-5zM876 550h1v5h-1zM874 571h5v1h-5zM876 569h1v5h-1zM874 590h5v1h-5zM876 588h1v5h-1zM874 609h5v1h-5zM876 607h1v5h-1zM874 628h5v1h-5zM876 626h1v5h-1zM874 646h5v1h-5zM876 644h1v5h-1zM874 665h5v1h-5zM876 663h1v5h-1zM874 684h5v1h-5zM876 682h1v5h-1zM893 115h5v1h-5zM895 113h1v5h-1zM893 134h5v1h-5zM895 132h1v5h-1zM893 153h5v1h-5zM895 151h1v5h-1zM893 172h5v1h-5zM895 170h1v5h-1zM893 191h5v1h-5zM895 189h1v5h-1zM893 210h5v1h-5zM895 208h1v5h-1zM893 229h5v1h-5zM895 227h1v5h-1zM893 248h5v1h-5zM895 246h1v5h-1zM893 267h5v1h-5zM895 265h1v5h-1zM893 286h5v1h-5zM895 284h1v5h-1zM893 305h5v1h-5zM895 303h1v5h-1zM893 324h5v1h-5zM895 322h1v5h-1zM893 343h5v1h-5zM895 341h1v5h-1zM893 362h5v1h-5zM895 360h1v5h-1zM893 381h5v1h-5zM895 379h1v5h-1zM893 400h5v1h-5zM895 398h1v5h-1zM893 419h5v1h-5zM895 417h1v5h-1zM893 438h5v1h-5zM895 436h1v5h-1zM893 457h5v1h-5zM895 455h1v5h-1zM893 476h5v1h-5zM895 474h1v5h-1zM893 495h5v1h-5zM895 493h1v5h-1zM893 514h5v1h-5zM895 512h1v5h-1zM893 533h5v1h-5zM895 531h1v5h-1zM893 552h5v1h-5zM895 550h1v5h-1zM893 571h5v1h-5zM895 569h1v5h-1zM893 590h5v1h-5zM895 588h1v5h-1zM893 609h5v1h-5zM895 607h1v5h-1zM893 628h5v1h-5zM895 626h1v5h-1zM893 646h5v1h-5zM895 644h1v5h-1zM893 665h5v1h-5zM895 663h1v5h-1zM893 684h5v1h-5zM895 682h1v5h-1zM912 115h5v1h-5zM914 113h1v5h-1zM912 134h5v1h-5zM914 132h1v5h-1zM912 153h5v1h-5zM914 151h1v5h-1zM912 172h5v1h-5zM914 170h1v5h-1zM912 191h5v1h-5zM914 189h1v5h-1zM912 210h5v1h-5zM914 208h1v5h-1zM912 229h5v1h-5zM914 227h1v5h-1zM912 248h5v1h-5zM914 246h1v5h-1zM912 267h5v1h-5zM914 265h1v5h-1zM912 286h5v1h-5zM914 284h1v5h-1zM912 305h5v1h-5zM914 303h1v5h-1zM912 324h5v1h-5zM914 322h1v5h-1zM912 343h5v1h-5zM914 341h1v5h-1zM912 362h5v1h-5zM914 360h1v5h-1zM912 381h5v1h-5zM914 379h1v5h-1zM912 400h5v1h-5zM914 398h1v5h-1zM912 419h5v1h-5zM914 417h1v5h-1zM912 438h5v1h-5zM914 436h1v5h-1zM912 457h5v1h-5zM914 455h1v5h-1zM912 476h5v1h-5zM914 474h1v5h-1zM912 495h5v1h-5zM914 493h1v5h-1zM912 514h5v1h-5zM914 512h1v5h-1zM912 533h5v1h-5zM914 531h1v5h-1zM912 552h5v1h-5zM914 550h1v5h-1zM912 571h5v1h-5zM914 569h1v5h-1zM912 590h5v1h-5zM914 588h1v5h-1zM912 609h5v1h-5zM914 607h1v5h-1zM912 628h5v1h-5zM914 626h1v5h-1zM912 646h5v1h-5zM914 644h1v5h-1zM912 665h5v1h-5zM914 663h1v5h-1zM912 684h5v1h-5zM914 682h1v5h-1zM931 115h5v1h-5zM933 113h1v5h-1zM931 134h5v1h-5zM933 132h1v5h-1zM931 153h5v1h-5zM933 151h1v5h-1zM931 172h5v1h-5zM933 170h1v5h-1zM931 191h5v1h-5zM933 189h1v5h-1zM931 210h5v1h-5zM933 208h1v5h-1zM931 229h5v1h-5zM933 227h1v5h-1zM931 248h5v1h-5zM933 246h1v5h-1zM931 267h5v1h-5zM933 265h1v5h-1zM931 286h5v1h-5zM933 284h1v5h-1zM931 305h5v1h-5zM933 303h1v5h-1zM931 324h5v1h-5zM933 322h1v5h-1zM931 343h5v1h-5zM933 341h1v5h-1zM931 362h5v1h-5zM933 360h1v5h-1zM931 381h5v1h-5zM933 379h1v5h-1zM931 400h5v1h-5zM933 398h1v5h-1zM931 419h5v1h-5zM933 417h1v5h-1zM931 438h5v1h-5zM933 436h1v5h-1zM931 457h5v1h-5zM933 455h1v5h-1zM931 476h5v1h-5zM933 474h1v5h-1zM931 495h5v1h-5zM933 493h1v5h-1zM931 514h5v1h-5zM933 512h1v5h-1zM931 533h5v1h-5zM933 531h1v5h-1zM931 552h5v1h-5zM933 550h1v5h-1zM931 571h5v1h-5zM933 569h1v5h-1zM931 590h5v1h-5zM933 588h1v5h-1zM931 609h5v1h-5zM933 607h1v5h-1zM931 628h5v1h-5zM933 626h1v5h-1zM931 646h5v1h-5zM933 644h1v5h-1zM931 665h5v1h-5zM933 663h1v5h-1zM931 684h5v1h-5zM933 682h1v5h-1zM949 115h5v1h-5zM951 113h1v5h-1zM949 134h5v1h-5zM951 132h1v5h-1zM949 153h5v1h-5zM951 151h1v5h-1zM949 172h5v1h-5zM951 170h1v5h-1zM949 191h5v1h-5zM951 189h1v5h-1zM949 210h5v1h-5zM951 208h1v5h-1zM949 229h5v1h-5zM951 227h1v5h-1zM949 248h5v1h-5zM951 246h1v5h-1zM949 267h5v1h-5zM951 265h1v5h-1zM949 286h5v1h-5zM951 284h1v5h-1zM949 305h5v1h-5zM951 303h1v5h-1zM949 324h5v1h-5zM951 322h1v5h-1zM949 343h5v1h-5zM951 341h1v5h-1zM949 362h5v1h-5zM951 360h1v5h-1zM949 381h5v1h-5zM951 379h1v5h-1zM949 400h5v1h-5zM951 398h1v5h-1zM949 419h5v1h-5zM951 417h1v5h-1zM949 438h5v1h-5zM951 436h1v5h-1zM949 457h5v1h-5zM951 455h1v5h-1zM949 476h5v1h-5zM951 474h1v5h-1zM949 495h5v1h-5zM951 493h1v5h-1zM949 514h5v1h-5zM951 512h1v5h-1zM949 533h5v1h-5zM951 531h1v5h-1zM949 552h5v1h-5zM951 550h1v5h-1zM949 571h5v1h-5zM951 569h1v5h-1zM949 590h5v1h-5zM951 588h1v5h-1zM949 609h5v1h-5zM951 607h1v5h-1zM949 628h5v1h-5zM951 626h1v5h-1zM949 646h5v1h-5zM951 644h1v5h-1zM949 665h5v1h-5zM951 663h1v5h-1zM949 684h5v1h-5zM951 682h1v5h-1zM968 115h5v1h-5zM970 113h1v5h-1zM968 134h5v1h-5zM970 132h1v5h-1zM968 153h5v1h-5zM970 151h1v5h-1zM968 172h5v1h-5zM970 170h1v5h-1zM968 191h5v1h-5zM970 189h1v5h-1zM968 210h5v1h-5zM970 208h1v5h-1zM968 229h5v1h-5zM970 227h1v5h-1zM968 248h5v1h-5zM970 246h1v5h-1zM968 267h5v1h-5zM970 265h1v5h-1zM968 286h5v1h-5zM970 284h1v5h-1zM968 305h5v1h-5zM970 303h1v5h-1zM968 324h5v1h-5zM970 322h1v5h-1zM968 343h5v1h-5zM970 341h1v5h-1zM968 362h5v1h-5zM970 360h1v5h-1zM968 381h5v1h-5zM970 379h1v5h-1zM968 400h5v1h-5zM970 398h1v5h-1zM968 419h5v1h-5zM970 417h1v5h-1zM968 438h5v1h-5zM970 436h1v5h-1zM968 457h5v1h-5zM970 455h1v5h-1zM968 476h5v1h-5zM970 474h1v5h-1zM968 495h5v1h-5zM970 493h1v5h-1zM968 514h5v1h-5zM970 512h1v5h-1zM968 533h5v1h-5zM970 531h1v5h-1zM968 552h5v1h-5zM970 550h1v5h-1zM968 571h5v1h-5zM970 569h1v5h-1zM968 590h5v1h-5zM970 588h1v5h-1zM968 609h5v1h-5zM970 607h1v5h-1zM968 628h5v1h-5zM970 626h1v5h-1zM968 646h5v1h-5zM970 644h1v5h-1zM968 665h5v1h-5zM970 663h1v5h-1zM968 684h5v1h-5zM970 682h1v5h-1zM987 115h5v1h-5zM989 113h1v5h-1zM987 134h5v1h-5zM989 132h1v5h-1zM987 153h5v1h-5zM989 151h1v5h-1zM987 172h5v1h-5zM989 170h1v5h-1zM987 191h5v1h-5zM989 189h1v5h-1zM987 210h5v1h-5zM989 208h1v5h-1zM987 229h5v1h-5zM989 227h1v5h-1zM987 248h5v1h-5zM989 246h1v5h-1zM987 267h5v1h-5zM989 265h1v5h-1zM987 286h5v1h-5zM989 284h1v5h-1zM987 305h5v1h-5zM989 303h1v5h-1zM987 324h5v1h-5zM989 322h1v5h-1zM987 343h5v1h-5zM989 341h1v5h-1zM987 362h5v1h-5zM989 360h1v5h-1zM987 381h5v1h-5zM989 379h1v5h-1zM987 400h5v1h-5zM989 398h1v5h-1zM987 419h5v1h-5zM989 417h1v5h-1zM987 438h5v1h-5zM989 436h1v5h-1zM987 457h5v1h-5zM989 455h1v5h-1zM987 476h5v1h-5zM989 474h1v5h-1zM987 495h5v1h-5zM989 493h1v5h-1zM987 514h5v1h-5zM989 512h1v5h-1zM987 533h5v1h-5zM989 531h1v5h-1zM987 552h5v1h-5zM989 550h1v5h-1zM987 571h5v1h-5zM989 569h1v5h-1zM987 590h5v1h-5zM989 588h1v5h-1zM987 609h5v1h-5zM989 607h1v5h-1zM987 628h5v1h-5zM989 626h1v5h-1zM987 646h5v1h-5zM989 644h1v5h-1zM987 665h5v1h-5zM989 663h1v5h-1zM987 684h5v1h-5zM989 682h1v5h-1z"/></svg>
<svg width="895" height="590" viewBox="112 113 895 590" style="position:absolute;left:0;top:0" shape-rendering="crispEdges"><defs><pattern id="ck" x="0" y="0" width="2" height="2" patternUnits="userSpaceOnUse"><rect width="2" height="2" fill="#3a0202"/><rect x="0" y="0" width="1" height="1" fill="#e07c6a"/><rect x="1" y="1" width="1" height="1" fill="#e07c6a"/></pattern><pattern id="wk" x="0" y="0" width="4" height="4" patternUnits="userSpaceOnUse"><rect width="4" height="4" fill="#f6e8dc"/><rect x="0" y="0" width="2" height="2" fill="#000"/><rect x="2" y="2" width="2" height="2" fill="#000"/></pattern></defs><rect x="490" y="174" width="27" height="501" fill="url(#ck)"/><rect x="503" y="174" width="1" height="501" fill="#e07c6a"/><rect x="490" y="188" width="27" height="1" fill="#e07c6a"/><rect x="490" y="201" width="27" height="1" fill="#e07c6a"/><rect x="490" y="215" width="27" height="1" fill="#e07c6a"/><rect x="490" y="228" width="27" height="1" fill="#e07c6a"/><rect x="490" y="242" width="27" height="1" fill="#e07c6a"/><rect x="490" y="255" width="27" height="1" fill="#e07c6a"/><rect x="490" y="269" width="27" height="1" fill="#e07c6a"/><rect x="490" y="282" width="27" height="1" fill="#e07c6a"/><rect x="490" y="296" width="27" height="1" fill="#e07c6a"/><rect x="490" y="309" width="27" height="1" fill="#e07c6a"/><rect x="490" y="323" width="27" height="1" fill="#e07c6a"/><rect x="490" y="336" width="27" height="1" fill="#e07c6a"/><rect x="490" y="350" width="27" height="1" fill="#e07c6a"/><rect x="490" y="363" width="27" height="1" fill="#e07c6a"/><rect x="490" y="377" width="27" height="1" fill="#e07c6a"/><rect x="490" y="390" width="27" height="1" fill="#e07c6a"/><rect x="490" y="404" width="27" height="1" fill="#e07c6a"/><rect x="490" y="417" width="27" height="1" fill="#e07c6a"/><rect x="490" y="431" width="27" height="1" fill="#e07c6a"/><rect x="490" y="444" width="27" height="1" fill="#e07c6a"/><rect x="490" y="458" width="27" height="1" fill="#e07c6a"/><rect x="490" y="471" width="27" height="1" fill="#e07c6a"/><rect x="490" y="485" width="27" height="1" fill="#e07c6a"/><rect x="490" y="498" width="27" height="1" fill="#e07c6a"/><rect x="490" y="512" width="27" height="1" fill="#e07c6a"/><rect x="490" y="525" width="27" height="1" fill="#e07c6a"/><rect x="490" y="539" width="27" height="1" fill="#e07c6a"/><rect x="490" y="552" width="27" height="1" fill="#e07c6a"/><rect x="490" y="566" width="27" height="1" fill="#e07c6a"/><rect x="490" y="579" width="27" height="1" fill="#e07c6a"/><rect x="490" y="593" width="27" height="1" fill="#e07c6a"/><rect x="490" y="606" width="27" height="1" fill="#e07c6a"/><rect x="490" y="620" width="27" height="1" fill="#e07c6a"/><rect x="490" y="633" width="27" height="1" fill="#e07c6a"/><rect x="490" y="647" width="27" height="1" fill="#e07c6a"/><rect x="490" y="660" width="27" height="1" fill="#e07c6a"/><rect x="490.5" y="174.5" width="26" height="500" fill="none" stroke="#e07c6a" stroke-width="1"/><rect x="546" y="142" width="28" height="533" fill="url(#ck)"/><rect x="560" y="142" width="1" height="533" fill="#e07c6a"/><rect x="546" y="155" width="28" height="1" fill="#e07c6a"/><rect x="546" y="168" width="28" height="1" fill="#e07c6a"/><rect x="546" y="182" width="28" height="1" fill="#e07c6a"/><rect x="546" y="195" width="28" height="1" fill="#e07c6a"/><rect x="546" y="208" width="28" height="1" fill="#e07c6a"/><rect x="546" y="221" width="28" height="1" fill="#e07c6a"/><rect x="546" y="234" width="28" height="1" fill="#e07c6a"/><rect x="546" y="247" width="28" height="1" fill="#e07c6a"/><rect x="546" y="261" width="28" height="1" fill="#e07c6a"/><rect x="546" y="274" width="28" height="1" fill="#e07c6a"/><rect x="546" y="287" width="28" height="1" fill="#e07c6a"/><rect x="546" y="300" width="28" height="1" fill="#e07c6a"/><rect x="546" y="313" width="28" height="1" fill="#e07c6a"/><rect x="546" y="327" width="28" height="1" fill="#e07c6a"/><rect x="546" y="340" width="28" height="1" fill="#e07c6a"/><rect x="546" y="353" width="28" height="1" fill="#e07c6a"/><rect x="546" y="366" width="28" height="1" fill="#e07c6a"/><rect x="546" y="379" width="28" height="1" fill="#e07c6a"/><rect x="546" y="392" width="28" height="1" fill="#e07c6a"/><rect x="546" y="406" width="28" height="1" fill="#e07c6a"/><rect x="546" y="419" width="28" height="1" fill="#e07c6a"/><rect x="546" y="432" width="28" height="1" fill="#e07c6a"/><rect x="546" y="445" width="28" height="1" fill="#e07c6a"/><rect x="546" y="458" width="28" height="1" fill="#e07c6a"/><rect x="546" y="472" width="28" height="1" fill="#e07c6a"/><rect x="546" y="485" width="28" height="1" fill="#e07c6a"/><rect x="546" y="498" width="28" height="1" fill="#e07c6a"/><rect x="546" y="511" width="28" height="1" fill="#e07c6a"/><rect x="546" y="524" width="28" height="1" fill="#e07c6a"/><rect x="546" y="537" width="28" height="1" fill="#e07c6a"/><rect x="546" y="551" width="28" height="1" fill="#e07c6a"/><rect x="546" y="564" width="28" height="1" fill="#e07c6a"/><rect x="546" y="577" width="28" height="1" fill="#e07c6a"/><rect x="546" y="590" width="28" height="1" fill="#e07c6a"/><rect x="546" y="603" width="28" height="1" fill="#e07c6a"/><rect x="546" y="616" width="28" height="1" fill="#e07c6a"/><rect x="546" y="630" width="28" height="1" fill="#e07c6a"/><rect x="546" y="643" width="28" height="1" fill="#e07c6a"/><rect x="546" y="656" width="28" height="1" fill="#e07c6a"/><rect x="546.5" y="142.5" width="27" height="532" fill="none" stroke="#e07c6a" stroke-width="1"/><rect x="603" y="174" width="27" height="501" fill="url(#ck)"/><rect x="616" y="174" width="1" height="501" fill="#e07c6a"/><rect x="603" y="188" width="27" height="1" fill="#e07c6a"/><rect x="603" y="201" width="27" height="1" fill="#e07c6a"/><rect x="603" y="215" width="27" height="1" fill="#e07c6a"/><rect x="603" y="228" width="27" height="1" fill="#e07c6a"/><rect x="603" y="242" width="27" height="1" fill="#e07c6a"/><rect x="603" y="255" width="27" height="1" fill="#e07c6a"/><rect x="603" y="269" width="27" height="1" fill="#e07c6a"/><rect x="603" y="282" width="27" height="1" fill="#e07c6a"/><rect x="603" y="296" width="27" height="1" fill="#e07c6a"/><rect x="603" y="309" width="27" height="1" fill="#e07c6a"/><rect x="603" y="323" width="27" height="1" fill="#e07c6a"/><rect x="603" y="336" width="27" height="1" fill="#e07c6a"/><rect x="603" y="350" width="27" height="1" fill="#e07c6a"/><rect x="603" y="363" width="27" height="1" fill="#e07c6a"/><rect x="603" y="377" width="27" height="1" fill="#e07c6a"/><rect x="603" y="390" width="27" height="1" fill="#e07c6a"/><rect x="603" y="404" width="27" height="1" fill="#e07c6a"/><rect x="603" y="417" width="27" height="1" fill="#e07c6a"/><rect x="603" y="431" width="27" height="1" fill="#e07c6a"/><rect x="603" y="444" width="27" height="1" fill="#e07c6a"/><rect x="603" y="458" width="27" height="1" fill="#e07c6a"/><rect x="603" y="471" width="27" height="1" fill="#e07c6a"/><rect x="603" y="485" width="27" height="1" fill="#e07c6a"/><rect x="603" y="498" width="27" height="1" fill="#e07c6a"/><rect x="603" y="512" width="27" height="1" fill="#e07c6a"/><rect x="603" y="525" width="27" height="1" fill="#e07c6a"/><rect x="603" y="539" width="27" height="1" fill="#e07c6a"/><rect x="603" y="552" width="27" height="1" fill="#e07c6a"/><rect x="603" y="566" width="27" height="1" fill="#e07c6a"/><rect x="603" y="579" width="27" height="1" fill="#e07c6a"/><rect x="603" y="593" width="27" height="1" fill="#e07c6a"/><rect x="603" y="606" width="27" height="1" fill="#e07c6a"/><rect x="603" y="620" width="27" height="1" fill="#e07c6a"/><rect x="603" y="633" width="27" height="1" fill="#e07c6a"/><rect x="603" y="647" width="27" height="1" fill="#e07c6a"/><rect x="603" y="660" width="27" height="1" fill="#e07c6a"/><rect x="603.5" y="174.5" width="26" height="500" fill="none" stroke="#e07c6a" stroke-width="1"/><rect x="400" y="405" width="61" height="28" fill="url(#ck)"/><rect x="430" y="405" width="1" height="28" fill="#e07c6a"/><rect x="400" y="419" width="61" height="1" fill="#e07c6a"/><rect x="400.5" y="405.5" width="60" height="27" fill="none" stroke="#e07c6a" stroke-width="1"/><rect x="413" y="405" width="1" height="28" fill="#e07c6a"/><rect x="425" y="405" width="1" height="28" fill="#e07c6a"/><rect x="437" y="405" width="1" height="28" fill="#e07c6a"/><rect x="449" y="405" width="1" height="28" fill="#e07c6a"/><rect x="660" y="405" width="59" height="28" fill="url(#ck)"/><rect x="689" y="405" width="1" height="28" fill="#e07c6a"/><rect x="660" y="419" width="59" height="1" fill="#e07c6a"/><rect x="660.5" y="405.5" width="58" height="27" fill="none" stroke="#e07c6a" stroke-width="1"/><rect x="673" y="405" width="1" height="28" fill="#e07c6a"/><rect x="685" y="405" width="1" height="28" fill="#e07c6a"/><rect x="697" y="405" width="1" height="28" fill="#e07c6a"/><rect x="709" y="405" width="1" height="28" fill="#e07c6a"/><rect x="461" y="411" width="29" height="16" fill="url(#ck)"/><rect x="465" y="411" width="21" height="16" fill="#f8d8cc"/><rect x="469" y="413" width="12" height="12" fill="url(#wk)"/><rect x="517" y="411" width="29" height="16" fill="url(#ck)"/><rect x="521" y="411" width="21" height="16" fill="#f8d8cc"/><rect x="525" y="413" width="12" height="12" fill="url(#wk)"/><rect x="574" y="411" width="29" height="16" fill="url(#ck)"/><rect x="578" y="411" width="21" height="16" fill="#f8d8cc"/><rect x="582" y="413" width="12" height="12" fill="url(#wk)"/><rect x="630" y="411" width="30" height="16" fill="url(#ck)"/><rect x="634" y="411" width="22" height="16" fill="#f8d8cc"/><rect x="639" y="413" width="12" height="12" fill="url(#wk)"/><rect x="490" y="411" width="27" height="16" fill="url(#ck)"/><rect x="546" y="411" width="28" height="16" fill="url(#ck)"/><rect x="603" y="411" width="27" height="16" fill="url(#ck)"/><rect x="384" y="419" width="17" height="1" fill="#e07c6a"/><rect x="719" y="419" width="19" height="1" fill="#e07c6a"/><path d="M391 410l9 8M720 418l7-7" stroke="#6a8cb0" stroke-width="1" fill="none"/><rect x="399" y="419" width="5" height="1" fill="#f0b098"/><rect x="401" y="417" width="1" height="5" fill="#f0b098"/><rect x="418" y="419" width="5" height="1" fill="#f0b098"/><rect x="420" y="417" width="1" height="5" fill="#f0b098"/><rect x="437" y="419" width="5" height="1" fill="#f0b098"/><rect x="439" y="417" width="1" height="5" fill="#f0b098"/><rect x="456" y="419" width="5" height="1" fill="#f0b098"/><rect x="458" y="417" width="1" height="5" fill="#f0b098"/><rect x="475" y="419" width="5" height="1" fill="#f0b098"/><rect x="477" y="417" width="1" height="5" fill="#f0b098"/><rect x="494" y="191" width="5" height="1" fill="#f0b098"/><rect x="496" y="189" width="1" height="5" fill="#f0b098"/><rect x="494" y="210" width="5" height="1" fill="#f0b098"/><rect x="496" y="208" width="1" height="5" fill="#f0b098"/><rect x="494" y="229" width="5" height="1" fill="#f0b098"/><rect x="496" y="227" width="1" height="5" fill="#f0b098"/><rect x="494" y="248" width="5" height="1" fill="#f0b098"/><rect x="496" y="246" width="1" height="5" fill="#f0b098"/><rect x="494" y="267" width="5" height="1" fill="#f0b098"/><rect x="496" y="265" width="1" height="5" fill="#f0b098"/><rect x="494" y="286" width="5" height="1" fill="#f0b098"/><rect x="496" y="284" width="1" height="5" fill="#f0b098"/><rect x="494" y="305" width="5" height="1" fill="#f0b098"/><rect x="496" y="303" width="1" height="5" fill="#f0b098"/><rect x="494" y="324" width="5" height="1" fill="#f0b098"/><rect x="496" y="322" width="1" height="5" fill="#f0b098"/><rect x="494" y="343" width="5" height="1" fill="#f0b098"/><rect x="496" y="341" width="1" height="5" fill="#f0b098"/><rect x="494" y="362" width="5" height="1" fill="#f0b098"/><rect x="496" y="360" width="1" height="5" fill="#f0b098"/><rect x="494" y="381" width="5" height="1" fill="#f0b098"/><rect x="496" y="379" width="1" height="5" fill="#f0b098"/><rect x="494" y="400" width="5" height="1" fill="#f0b098"/><rect x="496" y="398" width="1" height="5" fill="#f0b098"/><rect x="494" y="419" width="5" height="1" fill="#f0b098"/><rect x="496" y="417" width="1" height="5" fill="#f0b098"/><rect x="494" y="438" width="5" height="1" fill="#f0b098"/><rect x="496" y="436" width="1" height="5" fill="#f0b098"/><rect x="494" y="457" width="5" height="1" fill="#f0b098"/><rect x="496" y="455" width="1" height="5" fill="#f0b098"/><rect x="494" y="476" width="5" height="1" fill="#f0b098"/><rect x="496" y="474" width="1" height="5" fill="#f0b098"/><rect x="494" y="495" width="5" height="1" fill="#f0b098"/><rect x="496" y="493" width="1" height="5" fill="#f0b098"/><rect x="494" y="514" width="5" height="1" fill="#f0b098"/><rect x="496" y="512" width="1" height="5" fill="#f0b098"/><rect x="494" y="533" width="5" height="1" fill="#f0b098"/><rect x="496" y="531" width="1" height="5" fill="#f0b098"/><rect x="494" y="552" width="5" height="1" fill="#f0b098"/><rect x="496" y="550" width="1" height="5" fill="#f0b098"/><rect x="494" y="571" width="5" height="1" fill="#f0b098"/><rect x="496" y="569" width="1" height="5" fill="#f0b098"/><rect x="494" y="590" width="5" height="1" fill="#f0b098"/><rect x="496" y="588" width="1" height="5" fill="#f0b098"/><rect x="494" y="609" width="5" height="1" fill="#f0b098"/><rect x="496" y="607" width="1" height="5" fill="#f0b098"/><rect x="494" y="628" width="5" height="1" fill="#f0b098"/><rect x="496" y="626" width="1" height="5" fill="#f0b098"/><rect x="494" y="646" width="5" height="1" fill="#f0b098"/><rect x="496" y="644" width="1" height="5" fill="#f0b098"/><rect x="494" y="665" width="5" height="1" fill="#f0b098"/><rect x="496" y="663" width="1" height="5" fill="#f0b098"/><rect x="513" y="191" width="5" height="1" fill="#f0b098"/><rect x="515" y="189" width="1" height="5" fill="#f0b098"/><rect x="513" y="210" width="5" height="1" fill="#f0b098"/><rect x="515" y="208" width="1" height="5" fill="#f0b098"/><rect x="513" y="229" width="5" height="1" fill="#f0b098"/><rect x="515" y="227" width="1" height="5" fill="#f0b098"/><rect x="513" y="248" width="5" height="1" fill="#f0b098"/><rect x="515" y="246" width="1" height="5" fill="#f0b098"/><rect x="513" y="267" width="5" height="1" fill="#f0b098"/><rect x="515" y="265" width="1" height="5" fill="#f0b098"/><rect x="513" y="286" width="5" height="1" fill="#f0b098"/><rect x="515" y="284" width="1" height="5" fill="#f0b098"/><rect x="513" y="305" width="5" height="1" fill="#f0b098"/><rect x="515" y="303" width="1" height="5" fill="#f0b098"/><rect x="513" y="324" width="5" height="1" fill="#f0b098"/><rect x="515" y="322" width="1" height="5" fill="#f0b098"/><rect x="513" y="343" width="5" height="1" fill="#f0b098"/><rect x="515" y="341" width="1" height="5" fill="#f0b098"/><rect x="513" y="362" width="5" height="1" fill="#f0b098"/><rect x="515" y="360" width="1" height="5" fill="#f0b098"/><rect x="513" y="381" width="5" height="1" fill="#f0b098"/><rect x="515" y="379" width="1" height="5" fill="#f0b098"/><rect x="513" y="400" width="5" height="1" fill="#f0b098"/><rect x="515" y="398" width="1" height="5" fill="#f0b098"/><rect x="513" y="419" width="5" height="1" fill="#f0b098"/><rect x="515" y="417" width="1" height="5" fill="#f0b098"/><rect x="513" y="438" width="5" height="1" fill="#f0b098"/><rect x="515" y="436" width="1" height="5" fill="#f0b098"/><rect x="513" y="457" width="5" height="1" fill="#f0b098"/><rect x="515" y="455" width="1" height="5" fill="#f0b098"/><rect x="513" y="476" width="5" height="1" fill="#f0b098"/><rect x="515" y="474" width="1" height="5" fill="#f0b098"/><rect x="513" y="495" width="5" height="1" fill="#f0b098"/><rect x="515" y="493" width="1" height="5" fill="#f0b098"/><rect x="513" y="514" width="5" height="1" fill="#f0b098"/><rect x="515" y="512" width="1" height="5" fill="#f0b098"/><rect x="513" y="533" width="5" height="1" fill="#f0b098"/><rect x="515" y="531" width="1" height="5" fill="#f0b098"/><rect x="513" y="552" width="5" height="1" fill="#f0b098"/><rect x="515" y="550" width="1" height="5" fill="#f0b098"/><rect x="513" y="571" width="5" height="1" fill="#f0b098"/><rect x="515" y="569" width="1" height="5" fill="#f0b098"/><rect x="513" y="590" width="5" height="1" fill="#f0b098"/><rect x="515" y="588" width="1" height="5" fill="#f0b098"/><rect x="513" y="609" width="5" height="1" fill="#f0b098"/><rect x="515" y="607" width="1" height="5" fill="#f0b098"/><rect x="513" y="628" width="5" height="1" fill="#f0b098"/><rect x="515" y="626" width="1" height="5" fill="#f0b098"/><rect x="513" y="646" width="5" height="1" fill="#f0b098"/><rect x="515" y="644" width="1" height="5" fill="#f0b098"/><rect x="513" y="665" width="5" height="1" fill="#f0b098"/><rect x="515" y="663" width="1" height="5" fill="#f0b098"/><rect x="532" y="419" width="5" height="1" fill="#f0b098"/><rect x="534" y="417" width="1" height="5" fill="#f0b098"/><rect x="551" y="153" width="5" height="1" fill="#f0b098"/><rect x="553" y="151" width="1" height="5" fill="#f0b098"/><rect x="551" y="172" width="5" height="1" fill="#f0b098"/><rect x="553" y="170" width="1" height="5" fill="#f0b098"/><rect x="551" y="191" width="5" height="1" fill="#f0b098"/><rect x="553" y="189" width="1" height="5" fill="#f0b098"/><rect x="551" y="210" width="5" height="1" fill="#f0b098"/><rect x="553" y="208" width="1" height="5" fill="#f0b098"/><rect x="551" y="229" width="5" height="1" fill="#f0b098"/><rect x="553" y="227" width="1" height="5" fill="#f0b098"/><rect x="551" y="248" width="5" height="1" fill="#f0b098"/><rect x="553" y="246" width="1" height="5" fill="#f0b098"/><rect x="551" y="267" width="5" height="1" fill="#f0b098"/><rect x="553" y="265" width="1" height="5" fill="#f0b098"/><rect x="551" y="286" width="5" height="1" fill="#f0b098"/><rect x="553" y="284" width="1" height="5" fill="#f0b098"/><rect x="551" y="305" width="5" height="1" fill="#f0b098"/><rect x="553" y="303" width="1" height="5" fill="#f0b098"/><rect x="551" y="324" width="5" height="1" fill="#f0b098"/><rect x="553" y="322" width="1" height="5" fill="#f0b098"/><rect x="551" y="343" width="5" height="1" fill="#f0b098"/><rect x="553" y="341" width="1" height="5" fill="#f0b098"/><rect x="551" y="362" width="5" height="1" fill="#f0b098"/><rect x="553" y="360" width="1" height="5" fill="#f0b098"/><rect x="551" y="381" width="5" height="1" fill="#f0b098"/><rect x="553" y="379" width="1" height="5" fill="#f0b098"/><rect x="551" y="400" width="5" height="1" fill="#f0b098"/><rect x="553" y="398" width="1" height="5" fill="#f0b098"/><rect x="551" y="419" width="5" height="1" fill="#f0b098"/><rect x="553" y="417" width="1" height="5" fill="#f0b098"/><rect x="551" y="438" width="5" height="1" fill="#f0b098"/><rect x="553" y="436" width="1" height="5" fill="#f0b098"/><rect x="551" y="457" width="5" height="1" fill="#f0b098"/><rect x="553" y="455" width="1" height="5" fill="#f0b098"/><rect x="551" y="476" width="5" height="1" fill="#f0b098"/><rect x="553" y="474" width="1" height="5" fill="#f0b098"/><rect x="551" y="495" width="5" height="1" fill="#f0b098"/><rect x="553" y="493" width="1" height="5" fill="#f0b098"/><rect x="551" y="514" width="5" height="1" fill="#f0b098"/><rect x="553" y="512" width="1" height="5" fill="#f0b098"/><rect x="551" y="533" width="5" height="1" fill="#f0b098"/><rect x="553" y="531" width="1" height="5" fill="#f0b098"/><rect x="551" y="552" width="5" height="1" fill="#f0b098"/><rect x="553" y="550" width="1" height="5" fill="#f0b098"/><rect x="551" y="571" width="5" height="1" fill="#f0b098"/><rect x="553" y="569" width="1" height="5" fill="#f0b098"/><rect x="551" y="590" width="5" height="1" fill="#f0b098"/><rect x="553" y="588" width="1" height="5" fill="#f0b098"/><rect x="551" y="609" width="5" height="1" fill="#f0b098"/><rect x="553" y="607" width="1" height="5" fill="#f0b098"/><rect x="551" y="628" width="5" height="1" fill="#f0b098"/><rect x="553" y="626" width="1" height="5" fill="#f0b098"/><rect x="551" y="646" width="5" height="1" fill="#f0b098"/><rect x="553" y="644" width="1" height="5" fill="#f0b098"/><rect x="551" y="665" width="5" height="1" fill="#f0b098"/><rect x="553" y="663" width="1" height="5" fill="#f0b098"/><rect x="570" y="153" width="5" height="1" fill="#f0b098"/><rect x="572" y="151" width="1" height="5" fill="#f0b098"/><rect x="570" y="172" width="5" height="1" fill="#f0b098"/><rect x="572" y="170" width="1" height="5" fill="#f0b098"/><rect x="570" y="191" width="5" height="1" fill="#f0b098"/><rect x="572" y="189" width="1" height="5" fill="#f0b098"/><rect x="570" y="210" width="5" height="1" fill="#f0b098"/><rect x="572" y="208" width="1" height="5" fill="#f0b098"/><rect x="570" y="229" width="5" height="1" fill="#f0b098"/><rect x="572" y="227" width="1" height="5" fill="#f0b098"/><rect x="570" y="248" width="5" height="1" fill="#f0b098"/><rect x="572" y="246" width="1" height="5" fill="#f0b098"/><rect x="570" y="267" width="5" height="1" fill="#f0b098"/><rect x="572" y="265" width="1" height="5" fill="#f0b098"/><rect x="570" y="286" width="5" height="1" fill="#f0b098"/><rect x="572" y="284" width="1" height="5" fill="#f0b098"/><rect x="570" y="305" width="5" height="1" fill="#f0b098"/><rect x="572" y="303" width="1" height="5" fill="#f0b098"/><rect x="570" y="324" width="5" height="1" fill="#f0b098"/><rect x="572" y="322" width="1" height="5" fill="#f0b098"/><rect x="570" y="343" width="5" height="1" fill="#f0b098"/><rect x="572" y="341" width="1" height="5" fill="#f0b098"/><rect x="570" y="362" width="5" height="1" fill="#f0b098"/><rect x="572" y="360" width="1" height="5" fill="#f0b098"/><rect x="570" y="381" width="5" height="1" fill="#f0b098"/><rect x="572" y="379" width="1" height="5" fill="#f0b098"/><rect x="570" y="400" width="5" height="1" fill="#f0b098"/><rect x="572" y="398" width="1" height="5" fill="#f0b098"/><rect x="570" y="419" width="5" height="1" fill="#f0b098"/><rect x="572" y="417" width="1" height="5" fill="#f0b098"/><rect x="570" y="438" width="5" height="1" fill="#f0b098"/><rect x="572" y="436" width="1" height="5" fill="#f0b098"/><rect x="570" y="457" width="5" height="1" fill="#f0b098"/><rect x="572" y="455" width="1" height="5" fill="#f0b098"/><rect x="570" y="476" width="5" height="1" fill="#f0b098"/><rect x="572" y="474" width="1" height="5" fill="#f0b098"/><rect x="570" y="495" width="5" height="1" fill="#f0b098"/><rect x="572" y="493" width="1" height="5" fill="#f0b098"/><rect x="570" y="514" width="5" height="1" fill="#f0b098"/><rect x="572" y="512" width="1" height="5" fill="#f0b098"/><rect x="570" y="533" width="5" height="1" fill="#f0b098"/><rect x="572" y="531" width="1" height="5" fill="#f0b098"/><rect x="570" y="552" width="5" height="1" fill="#f0b098"/><rect x="572" y="550" width="1" height="5" fill="#f0b098"/><rect x="570" y="571" width="5" height="1" fill="#f0b098"/><rect x="572" y="569" width="1" height="5" fill="#f0b098"/><rect x="570" y="590" width="5" height="1" fill="#f0b098"/><rect x="572" y="588" width="1" height="5" fill="#f0b098"/><rect x="570" y="609" width="5" height="1" fill="#f0b098"/><rect x="572" y="607" width="1" height="5" fill="#f0b098"/><rect x="570" y="628" width="5" height="1" fill="#f0b098"/><rect x="572" y="626" width="1" height="5" fill="#f0b098"/><rect x="570" y="646" width="5" height="1" fill="#f0b098"/><rect x="572" y="644" width="1" height="5" fill="#f0b098"/><rect x="570" y="665" width="5" height="1" fill="#f0b098"/><rect x="572" y="663" width="1" height="5" fill="#f0b098"/><rect x="589" y="419" width="5" height="1" fill="#f0b098"/><rect x="591" y="417" width="1" height="5" fill="#f0b098"/><rect x="608" y="191" width="5" height="1" fill="#f0b098"/><rect x="610" y="189" width="1" height="5" fill="#f0b098"/><rect x="608" y="210" width="5" height="1" fill="#f0b098"/><rect x="610" y="208" width="1" height="5" fill="#f0b098"/><rect x="608" y="229" width="5" height="1" fill="#f0b098"/><rect x="610" y="227" width="1" height="5" fill="#f0b098"/><rect x="608" y="248" width="5" height="1" fill="#f0b098"/><rect x="610" y="246" width="1" height="5" fill="#f0b098"/><rect x="608" y="267" width="5" height="1" fill="#f0b098"/><rect x="610" y="265" width="1" height="5" fill="#f0b098"/><rect x="608" y="286" width="5" height="1" fill="#f0b098"/><rect x="610" y="284" width="1" height="5" fill="#f0b098"/><rect x="608" y="305" width="5" height="1" fill="#f0b098"/><rect x="610" y="303" width="1" height="5" fill="#f0b098"/><rect x="608" y="324" width="5" height="1" fill="#f0b098"/><rect x="610" y="322" width="1" height="5" fill="#f0b098"/><rect x="608" y="343" width="5" height="1" fill="#f0b098"/><rect x="610" y="341" width="1" height="5" fill="#f0b098"/><rect x="608" y="362" width="5" height="1" fill="#f0b098"/><rect x="610" y="360" width="1" height="5" fill="#f0b098"/><rect x="608" y="381" width="5" height="1" fill="#f0b098"/><rect x="610" y="379" width="1" height="5" fill="#f0b098"/><rect x="608" y="400" width="5" height="1" fill="#f0b098"/><rect x="610" y="398" width="1" height="5" fill="#f0b098"/><rect x="608" y="419" width="5" height="1" fill="#f0b098"/><rect x="610" y="417" width="1" height="5" fill="#f0b098"/><rect x="608" y="438" width="5" height="1" fill="#f0b098"/><rect x="610" y="436" width="1" height="5" fill="#f0b098"/><rect x="608" y="457" width="5" height="1" fill="#f0b098"/><rect x="610" y="455" width="1" height="5" fill="#f0b098"/><rect x="608" y="476" width="5" height="1" fill="#f0b098"/><rect x="610" y="474" width="1" height="5" fill="#f0b098"/><rect x="608" y="495" width="5" height="1" fill="#f0b098"/><rect x="610" y="493" width="1" height="5" fill="#f0b098"/><rect x="608" y="514" width="5" height="1" fill="#f0b098"/><rect x="610" y="512" width="1" height="5" fill="#f0b098"/><rect x="608" y="533" width="5" height="1" fill="#f0b098"/><rect x="610" y="531" width="1" height="5" fill="#f0b098"/><rect x="608" y="552" width="5" height="1" fill="#f0b098"/><rect x="610" y="550" width="1" height="5" fill="#f0b098"/><rect x="608" y="571" width="5" height="1" fill="#f0b098"/><rect x="610" y="569" width="1" height="5" fill="#f0b098"/><rect x="608" y="590" width="5" height="1" fill="#f0b098"/><rect x="610" y="588" width="1" height="5" fill="#f0b098"/><rect x="608" y="609" width="5" height="1" fill="#f0b098"/><rect x="610" y="607" width="1" height="5" fill="#f0b098"/><rect x="608" y="628" width="5" height="1" fill="#f0b098"/><rect x="610" y="626" width="1" height="5" fill="#f0b098"/><rect x="608" y="646" width="5" height="1" fill="#f0b098"/><rect x="610" y="644" width="1" height="5" fill="#f0b098"/><rect x="608" y="665" width="5" height="1" fill="#f0b098"/><rect x="610" y="663" width="1" height="5" fill="#f0b098"/><rect x="627" y="191" width="5" height="1" fill="#f0b098"/><rect x="629" y="189" width="1" height="5" fill="#f0b098"/><rect x="627" y="210" width="5" height="1" fill="#f0b098"/><rect x="629" y="208" width="1" height="5" fill="#f0b098"/><rect x="627" y="229" width="5" height="1" fill="#f0b098"/><rect x="629" y="227" width="1" height="5" fill="#f0b098"/><rect x="627" y="248" width="5" height="1" fill="#f0b098"/><rect x="629" y="246" width="1" height="5" fill="#f0b098"/><rect x="627" y="267" width="5" height="1" fill="#f0b098"/><rect x="629" y="265" width="1" height="5" fill="#f0b098"/><rect x="627" y="286" width="5" height="1" fill="#f0b098"/><rect x="629" y="284" width="1" height="5" fill="#f0b098"/><rect x="627" y="305" width="5" height="1" fill="#f0b098"/><rect x="629" y="303" width="1" height="5" fill="#f0b098"/><rect x="627" y="324" width="5" height="1" fill="#f0b098"/><rect x="629" y="322" width="1" height="5" fill="#f0b098"/><rect x="627" y="343" width="5" height="1" fill="#f0b098"/><rect x="629" y="341" width="1" height="5" fill="#f0b098"/><rect x="627" y="362" width="5" height="1" fill="#f0b098"/><rect x="629" y="360" width="1" height="5" fill="#f0b098"/><rect x="627" y="381" width="5" height="1" fill="#f0b098"/><rect x="629" y="379" width="1" height="5" fill="#f0b098"/><rect x="627" y="400" width="5" height="1" fill="#f0b098"/><rect x="629" y="398" width="1" height="5" fill="#f0b098"/><rect x="627" y="419" width="5" height="1" fill="#f0b098"/><rect x="629" y="417" width="1" height="5" fill="#f0b098"/><rect x="627" y="438" width="5" height="1" fill="#f0b098"/><rect x="629" y="436" width="1" height="5" fill="#f0b098"/><rect x="627" y="457" width="5" height="1" fill="#f0b098"/><rect x="629" y="455" width="1" height="5" fill="#f0b098"/><rect x="627" y="476" width="5" height="1" fill="#f0b098"/><rect x="629" y="474" width="1" height="5" fill="#f0b098"/><rect x="627" y="495" width="5" height="1" fill="#f0b098"/><rect x="629" y="493" width="1" height="5" fill="#f0b098"/><rect x="627" y="514" width="5" height="1" fill="#f0b098"/><rect x="629" y="512" width="1" height="5" fill="#f0b098"/><rect x="627" y="533" width="5" height="1" fill="#f0b098"/><rect x="629" y="531" width="1" height="5" fill="#f0b098"/><rect x="627" y="552" width="5" height="1" fill="#f0b098"/><rect x="629" y="550" width="1" height="5" fill="#f0b098"/><rect x="627" y="571" width="5" height="1" fill="#f0b098"/><rect x="629" y="569" width="1" height="5" fill="#f0b098"/><rect x="627" y="590" width="5" height="1" fill="#f0b098"/><rect x="629" y="588" width="1" height="5" fill="#f0b098"/><rect x="627" y="609" width="5" height="1" fill="#f0b098"/><rect x="629" y="607" width="1" height="5" fill="#f0b098"/><rect x="627" y="628" width="5" height="1" fill="#f0b098"/><rect x="629" y="626" width="1" height="5" fill="#f0b098"/><rect x="627" y="646" width="5" height="1" fill="#f0b098"/><rect x="629" y="644" width="1" height="5" fill="#f0b098"/><rect x="627" y="665" width="5" height="1" fill="#f0b098"/><rect x="629" y="663" width="1" height="5" fill="#f0b098"/><rect x="646" y="419" width="5" height="1" fill="#f0b098"/><rect x="648" y="417" width="1" height="5" fill="#f0b098"/><rect x="665" y="419" width="5" height="1" fill="#f0b098"/><rect x="667" y="417" width="1" height="5" fill="#f0b098"/><rect x="684" y="419" width="5" height="1" fill="#f0b098"/><rect x="686" y="417" width="1" height="5" fill="#f0b098"/><rect x="703" y="419" width="5" height="1" fill="#f0b098"/><rect x="705" y="417" width="1" height="5" fill="#f0b098"/><circle cx="401.5" cy="419.5" r="3.2" fill="#5a9ee6" shape-rendering="auto"/><circle cx="459.5" cy="419.5" r="3.2" fill="#5a9ee6" shape-rendering="auto"/><circle cx="503.5" cy="405.5" r="3.2" fill="#5a9ee6" shape-rendering="auto"/><circle cx="546.5" cy="419.5" r="3.2" fill="#5a9ee6" shape-rendering="auto"/><circle cx="573.5" cy="419.5" r="3.2" fill="#5a9ee6" shape-rendering="auto"/><circle cx="559.5" cy="405.5" r="3.2" fill="#5a9ee6" shape-rendering="auto"/><circle cx="603.5" cy="419.5" r="3.2" fill="#5a9ee6" shape-rendering="auto"/><circle cx="629.5" cy="419.5" r="3.2" fill="#5a9ee6" shape-rendering="auto"/><circle cx="616.5" cy="432.5" r="3.2" fill="#5a9ee6" shape-rendering="auto"/><circle cx="660.5" cy="419.5" r="3.2" fill="#5a9ee6" shape-rendering="auto"/><rect x="487.5" y="416.5" width="6" height="6" fill="#5a9ee6"/><rect x="513.5" y="416.5" width="6" height="6" fill="#5a9ee6"/><rect x="500.5" y="429.5" width="6" height="6" fill="#5a9ee6"/><rect x="556.5" y="429.5" width="6" height="6" fill="#5a9ee6"/><rect x="613.5" y="402.5" width="6" height="6" fill="#5a9ee6"/><rect x="715.5" y="416.5" width="6" height="6" fill="#5a9ee6"/><rect x="490" y="674" width="27" height="1" fill="#6a8cd0"/><rect x="546" y="674" width="28" height="1" fill="#6a8cd0"/><rect x="603" y="674" width="27" height="1" fill="#6a8cd0"/><path d="M498 288h3v1h-3zM499 289h1v1h-1zM499 290h1v1h-1zM499 291h1v1h-1zM499 292h1v1h-1zM502 288h1v1h-1zM502 289h1v1h-1zM502 290h1v1h-1zM502 291h1v1h-1zM502 292h3v1h-3zM507 288h1v1h-1zM506 289h2v1h-2zM507 290h1v1h-1zM507 291h1v1h-1zM506 292h3v1h-3zM496 294h1v1h-1zM498 294h1v1h-1zM496 295h3v1h-3zM496 296h3v1h-3zM496 297h1v1h-1zM498 297h1v1h-1zM496 298h1v1h-1zM498 298h1v1h-1zM500 294h1v1h-1zM500 295h1v1h-1zM500 296h1v1h-1zM500 297h1v1h-1zM500 298h3v1h-3zM504 294h3v1h-3zM504 295h1v1h-1zM506 295h1v1h-1zM504 296h1v1h-1zM506 296h1v1h-1zM504 297h1v1h-1zM506 297h1v1h-1zM504 298h3v1h-3zM508 294h3v1h-3zM508 295h1v1h-1zM508 296h1v1h-1zM508 297h1v1h-1zM508 298h3v1h-3zM554 272h3v1h-3zM555 273h1v1h-1zM555 274h1v1h-1zM555 275h1v1h-1zM555 276h1v1h-1zM558 272h1v1h-1zM558 273h1v1h-1zM558 274h1v1h-1zM558 275h1v1h-1zM558 276h3v1h-3zM562 272h2v1h-2zM564 273h1v1h-1zM563 274h1v1h-1zM564 275h1v1h-1zM562 276h2v1h-2zM552 278h1v1h-1zM554 278h1v1h-1zM552 279h3v1h-3zM552 280h3v1h-3zM552 281h1v1h-1zM554 281h1v1h-1zM552 282h1v1h-1zM554 282h1v1h-1zM556 278h1v1h-1zM556 279h1v1h-1zM556 280h1v1h-1zM556 281h1v1h-1zM556 282h3v1h-3zM560 278h3v1h-3zM560 279h1v1h-1zM562 279h1v1h-1zM560 280h1v1h-1zM562 280h1v1h-1zM560 281h1v1h-1zM562 281h1v1h-1zM560 282h3v1h-3zM564 278h3v1h-3zM564 279h1v1h-1zM564 280h1v1h-1zM564 281h1v1h-1zM564 282h3v1h-3zM611 288h3v1h-3zM612 289h1v1h-1zM612 290h1v1h-1zM612 291h1v1h-1zM612 292h1v1h-1zM615 288h1v1h-1zM615 289h1v1h-1zM615 290h1v1h-1zM615 291h1v1h-1zM615 292h3v1h-3zM619 288h3v1h-3zM621 289h1v1h-1zM620 290h1v1h-1zM620 291h1v1h-1zM620 292h1v1h-1zM609 294h1v1h-1zM611 294h1v1h-1zM609 295h3v1h-3zM609 296h3v1h-3zM609 297h1v1h-1zM611 297h1v1h-1zM609 298h1v1h-1zM611 298h1v1h-1zM613 294h1v1h-1zM613 295h1v1h-1zM613 296h1v1h-1zM613 297h1v1h-1zM613 298h3v1h-3zM617 294h3v1h-3zM617 295h1v1h-1zM619 295h1v1h-1zM617 296h1v1h-1zM619 296h1v1h-1zM617 297h1v1h-1zM619 297h1v1h-1zM617 298h3v1h-3zM621 294h3v1h-3zM621 295h1v1h-1zM621 296h1v1h-1zM621 297h1v1h-1zM621 298h3v1h-3zM498 551h3v1h-3zM499 552h1v1h-1zM499 553h1v1h-1zM499 554h1v1h-1zM499 555h1v1h-1zM502 551h1v1h-1zM502 552h1v1h-1zM502 553h1v1h-1zM502 554h1v1h-1zM502 555h3v1h-3zM506 551h2v1h-2zM508 552h1v1h-1zM507 553h1v1h-1zM506 554h1v1h-1zM506 555h3v1h-3zM496 557h1v1h-1zM498 557h1v1h-1zM496 558h3v1h-3zM496 559h3v1h-3zM496 560h1v1h-1zM498 560h1v1h-1zM496 561h1v1h-1zM498 561h1v1h-1zM500 557h1v1h-1zM500 558h1v1h-1zM500 559h1v1h-1zM500 560h1v1h-1zM500 561h3v1h-3zM504 557h3v1h-3zM504 558h1v1h-1zM506 558h1v1h-1zM504 559h1v1h-1zM506 559h1v1h-1zM504 560h1v1h-1zM506 560h1v1h-1zM504 561h3v1h-3zM508 557h3v1h-3zM508 558h1v1h-1zM508 559h1v1h-1zM508 560h1v1h-1zM508 561h3v1h-3zM554 551h3v1h-3zM555 552h1v1h-1zM555 553h1v1h-1zM555 554h1v1h-1zM555 555h1v1h-1zM558 551h1v1h-1zM558 552h1v1h-1zM558 553h1v1h-1zM558 554h1v1h-1zM558 555h3v1h-3zM562 551h1v1h-1zM564 551h1v1h-1zM562 552h1v1h-1zM564 552h1v1h-1zM562 553h3v1h-3zM564 554h1v1h-1zM564 555h1v1h-1zM552 557h1v1h-1zM554 557h1v1h-1zM552 558h3v1h-3zM552 559h3v1h-3zM552 560h1v1h-1zM554 560h1v1h-1zM552 561h1v1h-1zM554 561h1v1h-1zM556 557h1v1h-1zM556 558h1v1h-1zM556 559h1v1h-1zM556 560h1v1h-1zM556 561h3v1h-3zM560 557h3v1h-3zM560 558h1v1h-1zM562 558h1v1h-1zM560 559h1v1h-1zM562 559h1v1h-1zM560 560h1v1h-1zM562 560h1v1h-1zM560 561h3v1h-3zM564 557h3v1h-3zM564 558h1v1h-1zM564 559h1v1h-1zM564 560h1v1h-1zM564 561h3v1h-3zM611 551h3v1h-3zM612 552h1v1h-1zM612 553h1v1h-1zM612 554h1v1h-1zM612 555h1v1h-1zM615 551h1v1h-1zM615 552h1v1h-1zM615 553h1v1h-1zM615 554h1v1h-1zM615 555h3v1h-3zM619 551h3v1h-3zM619 552h1v1h-1zM621 552h1v1h-1zM619 553h3v1h-3zM619 554h1v1h-1zM621 554h1v1h-1zM619 555h3v1h-3zM609 557h1v1h-1zM611 557h1v1h-1zM609 558h3v1h-3zM609 559h3v1h-3zM609 560h1v1h-1zM611 560h1v1h-1zM609 561h1v1h-1zM611 561h1v1h-1zM613 557h1v1h-1zM613 558h1v1h-1zM613 559h1v1h-1zM613 560h1v1h-1zM613 561h3v1h-3zM617 557h3v1h-3zM617 558h1v1h-1zM619 558h1v1h-1zM617 559h1v1h-1zM619 559h1v1h-1zM617 560h1v1h-1zM619 560h1v1h-1zM617 561h3v1h-3zM621 557h3v1h-3zM621 558h1v1h-1zM621 559h1v1h-1zM621 560h1v1h-1zM621 561h3v1h-3zM389 415h2v1h-2zM389 416h1v1h-1zM391 416h1v1h-1zM389 417h2v1h-2zM389 418h1v1h-1zM389 419h1v1h-1zM394 415h1v1h-1zM393 416h2v1h-2zM394 417h1v1h-1zM394 418h1v1h-1zM393 419h3v1h-3zM386 423h2v1h-2zM386 424h1v1h-1zM388 424h1v1h-1zM386 425h2v1h-2zM386 426h1v1h-1zM386 427h1v1h-1zM390 424h3v1h-3zM390 425h1v1h-1zM392 425h1v1h-1zM390 426h1v1h-1zM392 426h1v1h-1zM390 427h3v1h-3zM394 424h1v1h-1zM396 424h1v1h-1zM394 425h2v1h-2zM394 426h1v1h-1zM394 427h1v1h-1zM399 423h1v1h-1zM398 424h3v1h-3zM399 425h1v1h-1zM399 426h1v1h-1zM399 427h2v1h-2zM425 415h3v1h-3zM426 416h1v1h-1zM426 417h1v1h-1zM426 418h1v1h-1zM426 419h1v1h-1zM429 415h1v1h-1zM429 416h1v1h-1zM429 417h1v1h-1zM429 418h1v1h-1zM429 419h3v1h-3zM433 415h3v1h-3zM433 416h1v1h-1zM435 416h1v1h-1zM433 417h3v1h-3zM435 418h1v1h-1zM433 419h2v1h-2zM494 415h3v1h-3zM494 416h1v1h-1zM494 417h1v1h-1zM494 418h1v1h-1zM494 419h3v1h-3zM498 416h1v1h-1zM500 416h1v1h-1zM498 417h2v1h-2zM498 418h1v1h-1zM498 419h1v1h-1zM502 416h3v1h-3zM502 417h1v1h-1zM504 417h1v1h-1zM502 418h1v1h-1zM504 418h1v1h-1zM502 419h3v1h-3zM507 416h2v1h-2zM506 417h2v1h-2zM507 418h2v1h-2zM506 419h2v1h-2zM511 415h1v1h-1zM510 416h2v1h-2zM511 417h1v1h-1zM511 418h1v1h-1zM510 419h3v1h-3zM551 415h3v1h-3zM551 416h1v1h-1zM551 417h1v1h-1zM551 418h1v1h-1zM551 419h3v1h-3zM555 416h1v1h-1zM557 416h1v1h-1zM555 417h2v1h-2zM555 418h1v1h-1zM555 419h1v1h-1zM559 416h3v1h-3zM559 417h1v1h-1zM561 417h1v1h-1zM559 418h1v1h-1zM561 418h1v1h-1zM559 419h3v1h-3zM564 416h2v1h-2zM563 417h2v1h-2zM564 418h2v1h-2zM563 419h2v1h-2zM567 415h2v1h-2zM569 416h1v1h-1zM568 417h1v1h-1zM567 418h1v1h-1zM567 419h3v1h-3zM608 415h3v1h-3zM608 416h1v1h-1zM608 417h1v1h-1zM608 418h1v1h-1zM608 419h3v1h-3zM612 416h1v1h-1zM614 416h1v1h-1zM612 417h2v1h-2zM612 418h1v1h-1zM612 419h1v1h-1zM616 416h3v1h-3zM616 417h1v1h-1zM618 417h1v1h-1zM616 418h1v1h-1zM618 418h1v1h-1zM616 419h3v1h-3zM621 416h2v1h-2zM620 417h2v1h-2zM621 418h2v1h-2zM620 419h2v1h-2zM624 415h2v1h-2zM626 416h1v1h-1zM625 417h1v1h-1zM626 418h1v1h-1zM624 419h2v1h-2zM685 415h3v1h-3zM686 416h1v1h-1zM686 417h1v1h-1zM686 418h1v1h-1zM686 419h1v1h-1zM689 415h1v1h-1zM689 416h1v1h-1zM689 417h1v1h-1zM689 418h1v1h-1zM689 419h3v1h-3zM694 415h1v1h-1zM693 416h2v1h-2zM694 417h1v1h-1zM694 418h1v1h-1zM693 419h3v1h-3zM697 415h3v1h-3zM697 416h1v1h-1zM699 416h1v1h-1zM697 417h1v1h-1zM699 417h1v1h-1zM697 418h1v1h-1zM699 418h1v1h-1zM697 419h3v1h-3zM723 415h2v1h-2zM723 416h1v1h-1zM725 416h1v1h-1zM723 417h2v1h-2zM723 418h1v1h-1zM723 419h1v1h-1zM727 415h2v1h-2zM729 416h1v1h-1zM728 417h1v1h-1zM727 418h1v1h-1zM727 419h3v1h-3zM721 423h2v1h-2zM721 424h1v1h-1zM723 424h1v1h-1zM721 425h2v1h-2zM721 426h1v1h-1zM721 427h1v1h-1zM725 424h3v1h-3zM725 425h1v1h-1zM727 425h1v1h-1zM725 426h1v1h-1zM727 426h1v1h-1zM725 427h3v1h-3zM729 424h1v1h-1zM731 424h1v1h-1zM729 425h2v1h-2zM729 426h1v1h-1zM729 427h1v1h-1zM734 423h1v1h-1zM733 424h3v1h-3zM734 425h1v1h-1zM734 426h1v1h-1zM734 427h2v1h-2z" fill="#fff"/><path d="M418 424h1v1h-1zM418 425h1v1h-1zM418 426h1v1h-1zM419 425h1v1h-1zM419 426h1v1h-1zM420 424h1v1h-1zM420 425h1v1h-1zM420 427h1v1h-1zM421 425h1v1h-1zM421 427h1v1h-1zM422 426h1v1h-1zM423 425h1v1h-1zM424 424h1v1h-1zM424 425h1v1h-1zM424 427h1v1h-1zM426 424h1v1h-1zM426 426h1v1h-1zM427 425h1v1h-1zM427 426h1v1h-1zM427 427h1v1h-1zM428 425h1v1h-1zM428 427h1v1h-1zM429 424h1v1h-1zM429 425h1v1h-1zM429 426h1v1h-1zM431 427h1v1h-1zM433 425h1v1h-1zM434 424h1v1h-1zM434 425h1v1h-1zM435 424h1v1h-1zM435 426h1v1h-1zM435 427h1v1h-1zM436 424h1v1h-1zM436 427h1v1h-1zM437 425h1v1h-1zM437 427h1v1h-1zM438 426h1v1h-1zM439 424h1v1h-1zM439 425h1v1h-1zM439 427h1v1h-1zM440 424h1v1h-1zM440 425h1v1h-1zM440 427h1v1h-1zM441 424h1v1h-1zM441 426h1v1h-1zM442 425h1v1h-1zM442 426h1v1h-1zM442 427h1v1h-1zM444 425h1v1h-1zM444 426h1v1h-1zM445 424h1v1h-1zM445 425h1v1h-1zM445 427h1v1h-1zM446 424h1v1h-1zM446 425h1v1h-1zM446 426h1v1h-1zM447 424h1v1h-1zM447 427h1v1h-1zM448 425h1v1h-1zM448 427h1v1h-1zM449 426h1v1h-1zM449 427h1v1h-1zM450 426h1v1h-1zM450 427h1v1h-1zM451 425h1v1h-1zM451 426h1v1h-1zM451 427h1v1h-1zM452 424h1v1h-1zM452 426h1v1h-1zM452 427h1v1h-1zM453 425h1v1h-1zM454 424h1v1h-1zM454 425h1v1h-1zM454 427h1v1h-1zM455 424h1v1h-1zM455 425h1v1h-1zM455 427h1v1h-1zM456 424h1v1h-1zM456 425h1v1h-1zM456 427h1v1h-1zM457 425h1v1h-1zM457 426h1v1h-1zM458 425h1v1h-1zM458 426h1v1h-1zM458 427h1v1h-1zM459 424h1v1h-1zM459 425h1v1h-1zM460 424h1v1h-1zM460 425h1v1h-1zM461 425h1v1h-1zM461 426h1v1h-1zM461 427h1v1h-1zM462 425h1v1h-1zM462 426h1v1h-1zM462 427h1v1h-1zM463 424h1v1h-1zM463 425h1v1h-1zM463 427h1v1h-1zM464 424h1v1h-1zM465 424h1v1h-1zM465 427h1v1h-1zM466 427h1v1h-1zM467 424h1v1h-1zM467 425h1v1h-1zM467 426h1v1h-1zM467 427h1v1h-1zM468 425h1v1h-1zM468 427h1v1h-1zM470 426h1v1h-1zM471 424h1v1h-1zM471 425h1v1h-1zM471 427h1v1h-1zM472 424h1v1h-1zM472 427h1v1h-1zM473 424h1v1h-1zM473 426h1v1h-1zM474 424h1v1h-1zM474 425h1v1h-1zM474 426h1v1h-1zM475 424h1v1h-1zM476 425h1v1h-1zM477 424h1v1h-1zM477 425h1v1h-1zM477 426h1v1h-1zM477 427h1v1h-1zM478 424h1v1h-1zM478 425h1v1h-1zM478 427h1v1h-1zM479 424h1v1h-1zM479 425h1v1h-1zM479 426h1v1h-1zM479 427h1v1h-1zM480 426h1v1h-1zM480 427h1v1h-1zM481 424h1v1h-1zM481 425h1v1h-1zM481 426h1v1h-1zM482 425h1v1h-1zM482 426h1v1h-1zM482 427h1v1h-1zM483 424h1v1h-1zM483 427h1v1h-1zM484 424h1v1h-1zM484 425h1v1h-1zM484 426h1v1h-1zM485 425h1v1h-1zM486 424h1v1h-1zM486 425h1v1h-1zM486 426h1v1h-1zM487 424h1v1h-1zM487 426h1v1h-1zM487 427h1v1h-1zM488 424h1v1h-1zM488 426h1v1h-1zM488 427h1v1h-1zM489 424h1v1h-1zM489 427h1v1h-1zM490 426h1v1h-1zM490 427h1v1h-1zM491 424h1v1h-1zM493 424h1v1h-1zM493 426h1v1h-1zM493 427h1v1h-1zM494 425h1v1h-1zM494 426h1v1h-1zM494 427h1v1h-1zM495 425h1v1h-1zM495 426h1v1h-1zM496 424h1v1h-1zM497 427h1v1h-1zM498 425h1v1h-1zM498 427h1v1h-1zM499 426h1v1h-1zM499 427h1v1h-1zM500 426h1v1h-1zM500 427h1v1h-1zM501 424h1v1h-1zM501 427h1v1h-1zM502 424h1v1h-1zM502 425h1v1h-1zM502 426h1v1h-1zM502 427h1v1h-1zM503 424h1v1h-1zM503 425h1v1h-1zM503 427h1v1h-1zM504 425h1v1h-1zM505 425h1v1h-1zM505 426h1v1h-1zM506 425h1v1h-1zM506 426h1v1h-1zM507 425h1v1h-1zM507 426h1v1h-1zM508 424h1v1h-1zM508 425h1v1h-1zM508 426h1v1h-1zM509 424h1v1h-1zM509 425h1v1h-1zM510 424h1v1h-1zM510 426h1v1h-1zM511 425h1v1h-1zM511 426h1v1h-1zM511 427h1v1h-1zM512 424h1v1h-1zM512 425h1v1h-1zM512 426h1v1h-1zM512 427h1v1h-1zM513 424h1v1h-1zM513 426h1v1h-1zM514 424h1v1h-1zM514 426h1v1h-1zM515 426h1v1h-1zM516 425h1v1h-1zM517 424h1v1h-1zM517 425h1v1h-1zM517 426h1v1h-1zM518 427h1v1h-1zM519 424h1v1h-1zM519 425h1v1h-1zM519 426h1v1h-1zM520 426h1v1h-1zM521 424h1v1h-1zM521 425h1v1h-1zM521 427h1v1h-1zM522 424h1v1h-1zM522 426h1v1h-1zM522 427h1v1h-1zM523 426h1v1h-1zM523 427h1v1h-1zM524 424h1v1h-1zM524 425h1v1h-1zM524 426h1v1h-1zM525 425h1v1h-1zM525 426h1v1h-1zM525 427h1v1h-1zM526 424h1v1h-1zM526 426h1v1h-1zM527 425h1v1h-1zM527 427h1v1h-1zM528 426h1v1h-1zM529 426h1v1h-1zM530 426h1v1h-1zM530 427h1v1h-1zM531 424h1v1h-1zM531 425h1v1h-1zM532 425h1v1h-1zM533 424h1v1h-1zM533 427h1v1h-1zM534 425h1v1h-1zM534 426h1v1h-1zM535 427h1v1h-1zM536 424h1v1h-1zM536 425h1v1h-1zM536 426h1v1h-1zM537 425h1v1h-1zM537 427h1v1h-1zM538 424h1v1h-1zM538 425h1v1h-1zM538 427h1v1h-1zM539 424h1v1h-1zM539 425h1v1h-1zM539 427h1v1h-1zM540 424h1v1h-1zM540 425h1v1h-1zM540 426h1v1h-1zM541 424h1v1h-1zM541 426h1v1h-1zM541 427h1v1h-1zM542 424h1v1h-1zM542 425h1v1h-1zM543 424h1v1h-1zM543 425h1v1h-1zM543 426h1v1h-1zM544 427h1v1h-1zM545 424h1v1h-1zM545 425h1v1h-1zM545 426h1v1h-1zM546 424h1v1h-1zM546 425h1v1h-1zM546 427h1v1h-1zM547 427h1v1h-1zM549 425h1v1h-1zM549 427h1v1h-1zM550 426h1v1h-1zM551 425h1v1h-1zM551 426h1v1h-1zM551 427h1v1h-1zM552 424h1v1h-1zM552 425h1v1h-1zM552 426h1v1h-1zM552 427h1v1h-1zM553 425h1v1h-1zM554 425h1v1h-1zM555 424h1v1h-1zM555 425h1v1h-1zM555 426h1v1h-1zM555 427h1v1h-1zM556 424h1v1h-1zM556 426h1v1h-1zM557 425h1v1h-1zM558 427h1v1h-1zM559 427h1v1h-1zM560 425h1v1h-1zM560 426h1v1h-1zM560 427h1v1h-1zM561 424h1v1h-1zM561 425h1v1h-1zM561 426h1v1h-1zM561 427h1v1h-1zM562 425h1v1h-1zM562 426h1v1h-1zM563 424h1v1h-1zM563 425h1v1h-1zM563 427h1v1h-1zM564 424h1v1h-1zM564 427h1v1h-1zM565 424h1v1h-1zM565 425h1v1h-1zM565 427h1v1h-1zM566 424h1v1h-1zM566 425h1v1h-1zM566 427h1v1h-1zM567 424h1v1h-1zM567 425h1v1h-1zM567 426h1v1h-1zM567 427h1v1h-1zM568 424h1v1h-1zM568 425h1v1h-1zM568 426h1v1h-1zM568 427h1v1h-1zM569 424h1v1h-1zM569 425h1v1h-1zM569 426h1v1h-1zM569 427h1v1h-1zM570 424h1v1h-1zM570 425h1v1h-1zM570 427h1v1h-1zM571 424h1v1h-1zM571 425h1v1h-1zM571 426h1v1h-1zM572 424h1v1h-1zM572 425h1v1h-1zM572 426h1v1h-1zM572 427h1v1h-1zM573 425h1v1h-1zM573 426h1v1h-1zM573 427h1v1h-1zM574 425h1v1h-1zM574 427h1v1h-1zM575 425h1v1h-1zM575 426h1v1h-1zM575 427h1v1h-1zM576 426h1v1h-1zM576 427h1v1h-1zM577 427h1v1h-1zM578 424h1v1h-1zM578 425h1v1h-1zM578 426h1v1h-1zM578 427h1v1h-1zM579 424h1v1h-1zM579 427h1v1h-1zM580 425h1v1h-1zM581 425h1v1h-1zM581 426h1v1h-1zM582 425h1v1h-1zM582 426h1v1h-1zM583 424h1v1h-1zM583 425h1v1h-1zM583 426h1v1h-1zM584 425h1v1h-1zM585 427h1v1h-1zM586 424h1v1h-1zM586 425h1v1h-1zM586 427h1v1h-1zM587 424h1v1h-1zM587 425h1v1h-1zM588 425h1v1h-1zM588 426h1v1h-1zM588 427h1v1h-1zM589 425h1v1h-1zM589 426h1v1h-1zM590 425h1v1h-1zM590 426h1v1h-1zM591 427h1v1h-1zM592 426h1v1h-1zM592 427h1v1h-1zM593 424h1v1h-1zM593 425h1v1h-1zM593 427h1v1h-1zM594 425h1v1h-1zM594 426h1v1h-1zM595 424h1v1h-1zM595 425h1v1h-1zM595 426h1v1h-1zM596 425h1v1h-1zM596 426h1v1h-1zM597 424h1v1h-1zM597 426h1v1h-1zM598 426h1v1h-1zM598 427h1v1h-1zM599 424h1v1h-1zM599 425h1v1h-1zM599 427h1v1h-1zM600 424h1v1h-1zM600 426h1v1h-1zM601 424h1v1h-1zM601 425h1v1h-1zM601 426h1v1h-1zM603 424h1v1h-1zM603 426h1v1h-1zM603 427h1v1h-1zM604 427h1v1h-1zM605 424h1v1h-1zM605 425h1v1h-1zM605 427h1v1h-1zM606 424h1v1h-1zM606 425h1v1h-1zM606 426h1v1h-1zM607 425h1v1h-1zM608 424h1v1h-1zM608 425h1v1h-1zM608 427h1v1h-1zM609 424h1v1h-1zM609 425h1v1h-1zM609 426h1v1h-1zM609 427h1v1h-1zM611 426h1v1h-1zM611 427h1v1h-1zM612 427h1v1h-1zM613 425h1v1h-1zM614 424h1v1h-1zM614 426h1v1h-1zM614 427h1v1h-1zM615 425h1v1h-1zM615 426h1v1h-1zM616 424h1v1h-1zM616 426h1v1h-1zM616 427h1v1h-1zM617 424h1v1h-1zM617 427h1v1h-1zM618 424h1v1h-1zM618 425h1v1h-1zM618 426h1v1h-1zM618 427h1v1h-1zM619 424h1v1h-1zM620 426h1v1h-1zM620 427h1v1h-1zM621 424h1v1h-1zM621 425h1v1h-1zM621 426h1v1h-1zM621 427h1v1h-1zM622 424h1v1h-1zM622 426h1v1h-1zM622 427h1v1h-1zM623 426h1v1h-1zM623 427h1v1h-1zM624 425h1v1h-1zM624 426h1v1h-1zM624 427h1v1h-1zM625 424h1v1h-1zM625 425h1v1h-1zM625 426h1v1h-1zM625 427h1v1h-1zM626 425h1v1h-1zM627 425h1v1h-1zM627 426h1v1h-1zM627 427h1v1h-1zM628 424h1v1h-1zM628 425h1v1h-1zM628 426h1v1h-1zM628 427h1v1h-1zM629 424h1v1h-1zM629 425h1v1h-1zM629 426h1v1h-1zM630 424h1v1h-1zM630 425h1v1h-1zM630 426h1v1h-1zM630 427h1v1h-1zM632 424h1v1h-1zM632 425h1v1h-1zM633 424h1v1h-1zM633 427h1v1h-1zM634 424h1v1h-1zM634 425h1v1h-1zM635 425h1v1h-1zM636 426h1v1h-1zM636 427h1v1h-1zM637 424h1v1h-1zM637 425h1v1h-1zM638 424h1v1h-1zM638 425h1v1h-1zM638 426h1v1h-1zM638 427h1v1h-1zM639 425h1v1h-1zM639 427h1v1h-1zM640 424h1v1h-1zM640 425h1v1h-1zM640 426h1v1h-1zM641 427h1v1h-1zM642 425h1v1h-1zM642 426h1v1h-1zM642 427h1v1h-1zM643 426h1v1h-1zM644 424h1v1h-1zM644 425h1v1h-1zM645 425h1v1h-1zM645 427h1v1h-1zM646 424h1v1h-1zM646 426h1v1h-1zM646 427h1v1h-1zM647 426h1v1h-1zM647 427h1v1h-1zM648 424h1v1h-1zM648 425h1v1h-1zM648 426h1v1h-1zM649 424h1v1h-1zM649 425h1v1h-1zM649 426h1v1h-1zM649 427h1v1h-1zM650 424h1v1h-1zM651 425h1v1h-1zM651 426h1v1h-1zM652 424h1v1h-1zM652 425h1v1h-1zM652 426h1v1h-1zM652 427h1v1h-1zM653 424h1v1h-1zM653 425h1v1h-1zM653 426h1v1h-1zM654 424h1v1h-1zM654 426h1v1h-1zM655 426h1v1h-1zM655 427h1v1h-1zM656 425h1v1h-1zM656 426h1v1h-1zM657 425h1v1h-1zM657 427h1v1h-1zM658 424h1v1h-1zM658 425h1v1h-1zM658 426h1v1h-1zM659 424h1v1h-1zM659 425h1v1h-1zM659 426h1v1h-1zM659 427h1v1h-1zM660 424h1v1h-1zM660 426h1v1h-1zM660 427h1v1h-1zM661 427h1v1h-1zM662 424h1v1h-1zM662 426h1v1h-1zM663 424h1v1h-1zM663 425h1v1h-1zM663 426h1v1h-1zM664 426h1v1h-1zM664 427h1v1h-1zM665 424h1v1h-1zM665 425h1v1h-1zM665 427h1v1h-1zM666 427h1v1h-1zM667 426h1v1h-1zM667 427h1v1h-1zM668 424h1v1h-1zM668 425h1v1h-1zM668 427h1v1h-1zM669 425h1v1h-1zM669 426h1v1h-1zM670 427h1v1h-1zM671 425h1v1h-1zM671 426h1v1h-1zM671 427h1v1h-1zM672 424h1v1h-1zM672 426h1v1h-1zM672 427h1v1h-1zM673 424h1v1h-1zM673 425h1v1h-1zM673 426h1v1h-1zM675 424h1v1h-1zM675 426h1v1h-1zM675 427h1v1h-1zM676 424h1v1h-1zM676 426h1v1h-1zM677 424h1v1h-1zM677 426h1v1h-1zM677 427h1v1h-1zM678 424h1v1h-1zM678 427h1v1h-1zM679 424h1v1h-1zM679 426h1v1h-1zM679 427h1v1h-1zM680 426h1v1h-1zM681 424h1v1h-1zM681 426h1v1h-1zM681 427h1v1h-1zM682 424h1v1h-1zM682 426h1v1h-1zM683 425h1v1h-1zM683 426h1v1h-1zM683 427h1v1h-1zM684 424h1v1h-1zM684 425h1v1h-1zM685 425h1v1h-1zM685 426h1v1h-1zM685 427h1v1h-1zM686 425h1v1h-1zM686 426h1v1h-1zM686 427h1v1h-1zM687 424h1v1h-1zM687 425h1v1h-1zM687 426h1v1h-1zM688 424h1v1h-1zM689 425h1v1h-1zM689 427h1v1h-1zM690 425h1v1h-1zM690 426h1v1h-1zM691 424h1v1h-1zM691 425h1v1h-1z" fill="#fbeee6"/></svg>
</div>
<div class="a" style="left:1007px;top:113px;width:17px;height:590px;background:#f0f0f0"></div>
<svg class="a" style="left:1011px;top:119px" width="9" height="6"><path d="M0.5 5.5L4.5 1.5L8.5 5.5Z" fill="#000"/></svg>
<svg class="a" style="left:1011px;top:691px" width="9" height="6"><path d="M0.5 0.5L4.5 4.5L8.5 0.5Z" fill="#000"/></svg>
<div class="a" style="left:1008px;top:395px;width:15px;height:25px;border:1px solid #9a9a9a;border-radius:2px;background:linear-gradient(90deg,#fafafa,#e4e4e4)"></div>
<svg class="a" style="left:1012px;top:403px" width="8" height="8"><path d="M0 1.5h7M0 4.5h7M0 7.5h7" stroke="#404040"/></svg>
<div class="a" style="left:112px;top:703px;width:895px;height:17px;background:#f0f0f0"></div>
<svg class="a" style="left:117px;top:707px" width="6" height="9"><path d="M5.5 0.5L1.5 4.5L5.5 8.5Z" fill="#000"/></svg>
<svg class="a" style="left:997px;top:707px" width="6" height="9"><path d="M0.5 0.5L4.5 4.5L0.5 8.5Z" fill="#000"/></svg>
<div class="a" style="left:530px;top:704px;width:60px;height:15px;border:1px solid #9a9a9a;border-radius:2px;background:linear-gradient(#f4f4f4,#dadada)"></div>
<svg class="a" style="left:556px;top:707px" width="8" height="8"><path d="M1.5 0v6M4.5 0v6M7.5 0v6" stroke="#404040"/></svg>
<div class="t" style="left:5px;top:724px;font:11px 'Liberation Sans';transform:scaleX(1.0015);transform-origin:0 0;">Select: Enter the starting point</div>
<div class="a" style="left:456px;top:721px;width:1px;height:17px;background:#d0d0d0;box-shadow:1px 0 0 #fff"></div>
<div class="a" style="left:570px;top:721px;width:1px;height:17px;background:#d0d0d0;box-shadow:1px 0 0 #fff"></div>
<div class="a" style="left:635px;top:721px;width:1px;height:17px;background:#d0d0d0;box-shadow:1px 0 0 #fff"></div>
<div class="a" style="left:756px;top:721px;width:1px;height:17px;background:#d0d0d0;box-shadow:1px 0 0 #fff"></div>
<div class="a" style="left:877px;top:721px;width:1px;height:17px;background:#d0d0d0;box-shadow:1px 0 0 #fff"></div>
<div class="a" style="left:907px;top:721px;width:1px;height:17px;background:#d0d0d0;box-shadow:1px 0 0 #fff"></div>
<div class="a" style="left:945px;top:721px;width:1px;height:17px;background:#d0d0d0;box-shadow:1px 0 0 #fff"></div>
<div class="t" style="left:465px;top:724px;font:11px 'Liberation Sans';transform:scaleX(0.9530);transform-origin:0 0;">0 items</div>
<div class="t" style="left:579px;top:724px;font:11px 'Liberation Sans';transform:scaleX(0.9472);transform-origin:0 0;color:#d2603e">cond</div>
<div class="t" style="left:644px;top:724px;font:11px 'Liberation Sans';transform:scaleX(1.0111);transform-origin:0 0;">-10.3000, 12.7000</div>
<div class="t" style="left:765px;top:724px;font:11px 'Liberation Sans';transform:scaleX(1.0074);transform-origin:0 0;">-6.3000, 26.7000</div>
<div class="t" style="left:886px;top:724px;font:11px 'Liberation Sans';transform:scaleX(0.8621);transform-origin:0 0;">mm</div>
<div class="t" style="left:916px;top:724px;font:11px 'Liberation Sans';transform:scaleX(0.9297);transform-origin:0 0;">A/RF</div>
<div class="t" style="left:953px;top:724px;font:11px 'Liberation Sans';transform:scaleX(0.8761);transform-origin:0 0;">SimSchem</div>
<svg class="a" style="left:0;top:738px" width="1024" height="5" shape-rendering="crispEdges"><rect width="1024" height="5" fill="#4a4a4a"/><rect width="1024" height="1" fill="#1a1a1a"/><path d="M14 5Q28 -1 42 5Z" fill="#9ab0c0"/><rect x="154" y="2" width="62" height="3" fill="#8a8a8a"/><rect x="155" y="3" width="60" height="2" fill="#6a6a6a"/><rect x="218" y="2" width="62" height="3" fill="#8a8a8a"/><rect x="219" y="3" width="60" height="2" fill="#6a6a6a"/><rect x="282" y="2" width="62" height="3" fill="#8a8a8a"/><rect x="283" y="3" width="60" height="2" fill="#6a6a6a"/><rect x="346" y="2" width="62" height="3" fill="#8a8a8a"/><rect x="347" y="3" width="60" height="2" fill="#6a6a6a"/><rect x="410" y="2" width="62" height="3" fill="#8a8a8a"/><rect x="411" y="3" width="60" height="2" fill="#6a6a6a"/><rect x="474" y="2" width="62" height="3" fill="#8a8a8a"/><rect x="475" y="3" width="60" height="2" fill="#6a6a6a"/><rect x="538" y="2" width="62" height="3" fill="#2a2a2a"/><rect x="539" y="3" width="60" height="2" fill="#202020"/><rect x="602" y="2" width="62" height="3" fill="#8a8a8a"/><rect x="603" y="3" width="60" height="2" fill="#6a6a6a"/><rect x="666" y="2" width="62" height="3" fill="#8a8a8a"/><rect x="667" y="3" width="60" height="2" fill="#6a6a6a"/><rect x="730" y="2" width="62" height="3" fill="#8a8a8a"/><rect x="731" y="3" width="60" height="2" fill="#6a6a6a"/><rect x="794" y="2" width="62" height="3" fill="#8a8a8a"/><rect x="795" y="3" width="60" height="2" fill="#6a6a6a"/><rect x="858" y="2" width="62" height="3" fill="#8a8a8a"/><rect x="859" y="3" width="60" height="2" fill="#6a6a6a"/><rect x="922" y="2" width="62" height="3" fill="#8a8a8a"/><rect x="923" y="3" width="60" height="2" fill="#6a6a6a"/><rect x="986" y="2" width="62" height="3" fill="#8a8a8a"/><rect x="987" y="3" width="60" height="2" fill="#6a6a6a"/></svg>
</body></html>
